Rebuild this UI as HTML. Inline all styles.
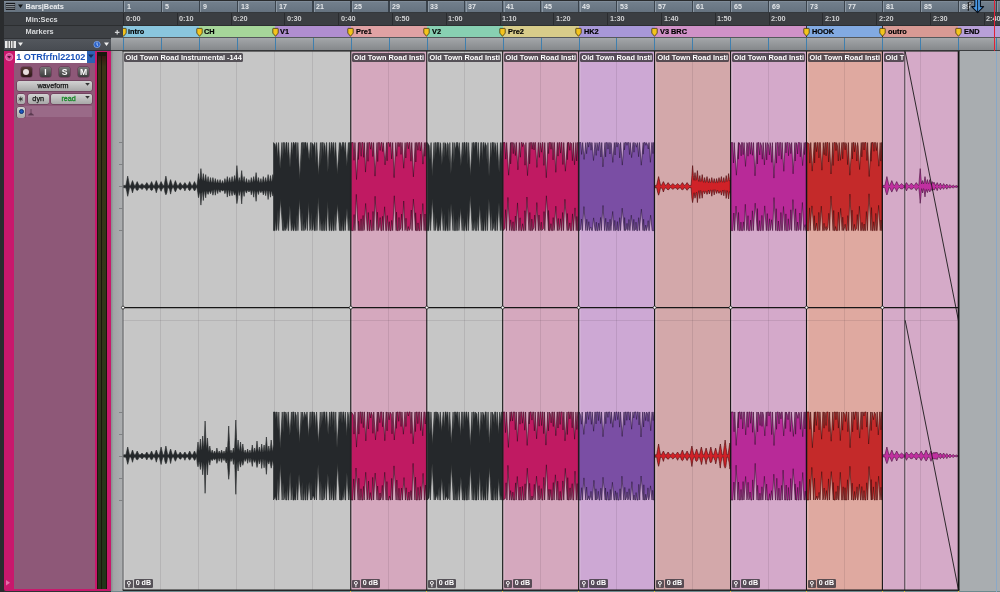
<!DOCTYPE html><html><head><meta charset="utf-8"><title>Pro Tools Edit Window</title><style>
*{box-sizing:border-box;margin:0;padding:0}
html,body{width:1000px;height:592px;overflow:hidden;background:#2b2d30;font-family:"Liberation Sans",sans-serif;}
#app{position:relative;width:1000px;height:592px;overflow:hidden;background:#303236}
.abs{position:absolute}
.rl,.bn,.ms,.mkt,.cl,.db,.btn,.tn{will-change:transform}
.rl{position:absolute;left:0;width:122px;color:#d8dadc;font-weight:bold;font-size:7.4px;letter-spacing:-0.05px}
.rl span{position:absolute;left:25.6px;top:1.3px;white-space:nowrap;line-height:9px}
.bn{position:absolute;top:3px;font-size:7.1px;font-weight:bold;color:#e4e7ea;line-height:9px}
.ms{position:absolute;top:14.4px;font-size:7.3px;font-weight:bold;color:#cfd0d2;line-height:9px}
.mk{position:absolute;top:26px;height:12px}
.mkt{position:absolute;top:27px;font-size:7.35px;-webkit-text-stroke:0.2px #000;font-weight:bold;color:#000;line-height:10px;white-space:nowrap}
.clip{position:absolute;top:51px;height:539px}
.cl{position:absolute;top:52.6px;height:9.4px;background:rgba(60,55,62,.82);color:#fff;font-weight:bold;font-size:7.35px;line-height:9.6px;padding-left:1.6px;border-radius:1.5px;white-space:nowrap;overflow:hidden}
.db{position:absolute;top:579.3px;height:8.6px;font-size:7.1px;font-weight:bold;color:#fff;line-height:8.6px;white-space:nowrap}
.db i{display:inline-block;width:7.6px;height:8px;background:rgba(60,55,62,.8);border-radius:1px;vertical-align:top;margin-right:1.6px;margin-top:0.5px;position:relative}
.db b{display:inline-block;height:8.6px;line-height:9.4px;background:rgba(60,55,62,.82);border-radius:1.3px;padding:0 1.5px;vertical-align:top}
.btn{position:absolute;border-radius:2px;font-weight:bold;color:#fff;text-align:center;box-shadow:0 0 0 0.5px rgba(40,20,35,.55)}
</style></head><body><div id="app">
<div class="abs" style="left:0;top:0;width:1000px;height:1px;background:#2a2c2e"></div>
<div class="abs" style="left:4px;top:1px;width:996px;height:12px;background:linear-gradient(#8793a0 0,#727f8c 10%,#64717e 100%)"></div>
<div class="abs" style="left:4px;top:13px;width:996px;height:13px;background:#3b3e42"></div>
<div class="abs" style="left:4px;top:25.5px;width:119px;height:12px;background:#3e4145"></div>
<div class="abs" style="left:4px;top:25px;width:996px;height:1px;background:#2c2e30"></div>
<div class="abs" style="left:4px;top:12px;width:996px;height:1px;background:#34383c"></div>
<div class="rl" style="top:1px;height:12px"><span style="color:#eceef0">Bars|Beats</span></div>
<div class="rl" style="top:14px;height:12px"><span>Min:Secs</span></div>
<div class="rl" style="top:26px;height:12px"><span>Markers</span></div>
<svg class="abs" style="left:4px;top:2px" width="20" height="10" viewBox="0 0 20 10"><rect x="1.3" y="0.6" width="10.2" height="7.6" fill="#15171b" stroke="#8a96a2" stroke-width="0.5"/><path d="M2 2.6h8.8M2 4.4h8.8M2 6.2h8.8" stroke="#d0d8e0" stroke-width="0.7"/><path d="M14 2.6h5l-2.5 3.4z" fill="#121416"/></svg>
<svg class="abs" style="left:114px;top:29px" width="7" height="7"><path d="M3.2 1v4.6M0.9 3.3h4.6" stroke="#d4d6d8" stroke-width="1.2"/></svg>
<div class="abs" style="left:123.8px;top:1px;width:1px;height:11px;background:#8c98a4"></div>
<div class="abs" style="left:122.5px;top:1px;width:1.2px;height:11px;background:#3a434c"></div>
<div class="bn" style="left:126.5px">1</div>
<div class="abs" style="left:161.7px;top:1px;width:1px;height:11px;background:#8c98a4"></div>
<div class="abs" style="left:160.5px;top:1px;width:1.2px;height:11px;background:#3a434c"></div>
<div class="bn" style="left:164.5px">5</div>
<div class="abs" style="left:199.7px;top:1px;width:1px;height:11px;background:#8c98a4"></div>
<div class="abs" style="left:198.5px;top:1px;width:1.2px;height:11px;background:#3a434c"></div>
<div class="bn" style="left:202.5px">9</div>
<div class="abs" style="left:237.7px;top:1px;width:1px;height:11px;background:#8c98a4"></div>
<div class="abs" style="left:236.5px;top:1px;width:1.2px;height:11px;background:#3a434c"></div>
<div class="bn" style="left:240.5px">13</div>
<div class="abs" style="left:275.7px;top:1px;width:1px;height:11px;background:#8c98a4"></div>
<div class="abs" style="left:274.5px;top:1px;width:1.2px;height:11px;background:#3a434c"></div>
<div class="bn" style="left:278.5px">17</div>
<div class="abs" style="left:313.6px;top:1px;width:1px;height:11px;background:#8c98a4"></div>
<div class="abs" style="left:312.4px;top:1px;width:1.2px;height:11px;background:#3a434c"></div>
<div class="bn" style="left:316.4px">21</div>
<div class="abs" style="left:351.6px;top:1px;width:1px;height:11px;background:#8c98a4"></div>
<div class="abs" style="left:350.4px;top:1px;width:1.2px;height:11px;background:#3a434c"></div>
<div class="bn" style="left:354.4px">25</div>
<div class="abs" style="left:389.6px;top:1px;width:1px;height:11px;background:#8c98a4"></div>
<div class="abs" style="left:388.4px;top:1px;width:1.2px;height:11px;background:#3a434c"></div>
<div class="bn" style="left:392.4px">29</div>
<div class="abs" style="left:427.6px;top:1px;width:1px;height:11px;background:#8c98a4"></div>
<div class="abs" style="left:426.4px;top:1px;width:1.2px;height:11px;background:#3a434c"></div>
<div class="bn" style="left:430.4px">33</div>
<div class="abs" style="left:465.5px;top:1px;width:1px;height:11px;background:#8c98a4"></div>
<div class="abs" style="left:464.3px;top:1px;width:1.2px;height:11px;background:#3a434c"></div>
<div class="bn" style="left:468.3px">37</div>
<div class="abs" style="left:503.5px;top:1px;width:1px;height:11px;background:#8c98a4"></div>
<div class="abs" style="left:502.3px;top:1px;width:1.2px;height:11px;background:#3a434c"></div>
<div class="bn" style="left:506.3px">41</div>
<div class="abs" style="left:541.5px;top:1px;width:1px;height:11px;background:#8c98a4"></div>
<div class="abs" style="left:540.3px;top:1px;width:1.2px;height:11px;background:#3a434c"></div>
<div class="bn" style="left:544.3px">45</div>
<div class="abs" style="left:579.5px;top:1px;width:1px;height:11px;background:#8c98a4"></div>
<div class="abs" style="left:578.3px;top:1px;width:1.2px;height:11px;background:#3a434c"></div>
<div class="bn" style="left:582.3px">49</div>
<div class="abs" style="left:617.4px;top:1px;width:1px;height:11px;background:#8c98a4"></div>
<div class="abs" style="left:616.2px;top:1px;width:1.2px;height:11px;background:#3a434c"></div>
<div class="bn" style="left:620.2px">53</div>
<div class="abs" style="left:655.4px;top:1px;width:1px;height:11px;background:#8c98a4"></div>
<div class="abs" style="left:654.2px;top:1px;width:1.2px;height:11px;background:#3a434c"></div>
<div class="bn" style="left:658.2px">57</div>
<div class="abs" style="left:693.4px;top:1px;width:1px;height:11px;background:#8c98a4"></div>
<div class="abs" style="left:692.2px;top:1px;width:1.2px;height:11px;background:#3a434c"></div>
<div class="bn" style="left:696.2px">61</div>
<div class="abs" style="left:731.4px;top:1px;width:1px;height:11px;background:#8c98a4"></div>
<div class="abs" style="left:730.2px;top:1px;width:1.2px;height:11px;background:#3a434c"></div>
<div class="bn" style="left:734.2px">65</div>
<div class="abs" style="left:769.3px;top:1px;width:1px;height:11px;background:#8c98a4"></div>
<div class="abs" style="left:768.1px;top:1px;width:1.2px;height:11px;background:#3a434c"></div>
<div class="bn" style="left:772.1px">69</div>
<div class="abs" style="left:807.3px;top:1px;width:1px;height:11px;background:#8c98a4"></div>
<div class="abs" style="left:806.1px;top:1px;width:1.2px;height:11px;background:#3a434c"></div>
<div class="bn" style="left:810.1px">73</div>
<div class="abs" style="left:845.3px;top:1px;width:1px;height:11px;background:#8c98a4"></div>
<div class="abs" style="left:844.1px;top:1px;width:1.2px;height:11px;background:#3a434c"></div>
<div class="bn" style="left:848.1px">77</div>
<div class="abs" style="left:883.2px;top:1px;width:1px;height:11px;background:#8c98a4"></div>
<div class="abs" style="left:882.1px;top:1px;width:1.2px;height:11px;background:#3a434c"></div>
<div class="bn" style="left:886.1px">81</div>
<div class="abs" style="left:921.2px;top:1px;width:1px;height:11px;background:#8c98a4"></div>
<div class="abs" style="left:920.0px;top:1px;width:1.2px;height:11px;background:#3a434c"></div>
<div class="bn" style="left:924.0px">85</div>
<div class="abs" style="left:959.2px;top:1px;width:1px;height:11px;background:#8c98a4"></div>
<div class="abs" style="left:958.0px;top:1px;width:1.2px;height:11px;background:#3a434c"></div>
<div class="bn" style="left:962.0px">89</div>
<div class="abs" style="left:997.2px;top:1px;width:1px;height:11px;background:#8c98a4"></div>
<div class="abs" style="left:996.0px;top:1px;width:1.2px;height:11px;background:#3a434c"></div>
<div class="abs" style="left:123.0px;top:13px;width:1px;height:12px;background:#2a2c2f"></div>
<div class="ms" style="left:125.5px">0:00</div>
<div class="abs" style="left:176.8px;top:13px;width:1px;height:12px;background:#2a2c2f"></div>
<div class="ms" style="left:179.3px">0:10</div>
<div class="abs" style="left:230.6px;top:13px;width:1px;height:12px;background:#2a2c2f"></div>
<div class="ms" style="left:233.1px">0:20</div>
<div class="abs" style="left:284.4px;top:13px;width:1px;height:12px;background:#2a2c2f"></div>
<div class="ms" style="left:286.9px">0:30</div>
<div class="abs" style="left:338.2px;top:13px;width:1px;height:12px;background:#2a2c2f"></div>
<div class="ms" style="left:340.7px">0:40</div>
<div class="abs" style="left:392.0px;top:13px;width:1px;height:12px;background:#2a2c2f"></div>
<div class="ms" style="left:394.5px">0:50</div>
<div class="abs" style="left:445.8px;top:13px;width:1px;height:12px;background:#2a2c2f"></div>
<div class="ms" style="left:448.3px">1:00</div>
<div class="abs" style="left:499.6px;top:13px;width:1px;height:12px;background:#2a2c2f"></div>
<div class="ms" style="left:502.1px">1:10</div>
<div class="abs" style="left:553.4px;top:13px;width:1px;height:12px;background:#2a2c2f"></div>
<div class="ms" style="left:555.9px">1:20</div>
<div class="abs" style="left:607.2px;top:13px;width:1px;height:12px;background:#2a2c2f"></div>
<div class="ms" style="left:609.7px">1:30</div>
<div class="abs" style="left:661.0px;top:13px;width:1px;height:12px;background:#2a2c2f"></div>
<div class="ms" style="left:663.5px">1:40</div>
<div class="abs" style="left:714.8px;top:13px;width:1px;height:12px;background:#2a2c2f"></div>
<div class="ms" style="left:717.3px">1:50</div>
<div class="abs" style="left:768.6px;top:13px;width:1px;height:12px;background:#2a2c2f"></div>
<div class="ms" style="left:771.1px">2:00</div>
<div class="abs" style="left:822.4px;top:13px;width:1px;height:12px;background:#2a2c2f"></div>
<div class="ms" style="left:824.9px">2:10</div>
<div class="abs" style="left:876.2px;top:13px;width:1px;height:12px;background:#2a2c2f"></div>
<div class="ms" style="left:878.7px">2:20</div>
<div class="abs" style="left:930.0px;top:13px;width:1px;height:12px;background:#2a2c2f"></div>
<div class="ms" style="left:932.5px">2:30</div>
<div class="abs" style="left:983.8px;top:13px;width:1px;height:12px;background:#2a2c2f"></div>
<div class="ms" style="left:986.3px">2:40</div>
<div class="abs" style="left:123px;top:25.5px;width:877px;height:11.7px;overflow:hidden">
<div class="mk" style="top:0;left:-0.0px;width:76.0px;background:#8ac6de"></div>
<div class="mk" style="top:0;left:75.9px;width:76.0px;background:#a6d69a"></div>
<div class="mk" style="top:0;left:151.9px;width:75.9px;background:#b08ed0"></div>
<div class="mk" style="top:0;left:227.8px;width:75.9px;background:#e0a2a4"></div>
<div class="mk" style="top:0;left:303.8px;width:75.9px;background:#88d0b2"></div>
<div class="mk" style="top:0;left:379.7px;width:76.0px;background:#d8cc8a"></div>
<div class="mk" style="top:0;left:455.7px;width:75.9px;background:#a898d8"></div>
<div class="mk" style="top:0;left:531.6px;width:151.9px;background:#d092c8"></div>
<div class="mk" style="top:0;left:683.5px;width:75.9px;background:#82aae2"></div>
<div class="mk" style="top:0;left:759.5px;width:76.0px;background:#d89a94"></div>
<div class="mk" style="top:0;left:835.4px;width:41.6px;background:#b8a0d8"></div>
<svg class="abs" style="left:-3.5px;top:0" width="8" height="12" viewBox="0 0 8 12"><path d="M1.3 2.4h4.4q0.5 0 0.5 0.5v4.2l-2.7 3.2l-2.7-3.2v-4.2q0-0.5 0.5-0.5z" fill="#f4c41c" stroke="#3c3008" stroke-width="0.75"/></svg>
<div class="mkt" style="top:1.2px;left:5.2px">intro</div>
<svg class="abs" style="left:72.5px;top:0" width="8" height="12" viewBox="0 0 8 12"><path d="M1.3 2.4h4.4q0.5 0 0.5 0.5v4.2l-2.7 3.2l-2.7-3.2v-4.2q0-0.5 0.5-0.5z" fill="#f4c41c" stroke="#3c3008" stroke-width="0.75"/></svg>
<div class="mkt" style="top:1.2px;left:81.1px">CH</div>
<svg class="abs" style="left:148.5px;top:0" width="8" height="12" viewBox="0 0 8 12"><path d="M1.3 2.4h4.4q0.5 0 0.5 0.5v4.2l-2.7 3.2l-2.7-3.2v-4.2q0-0.5 0.5-0.5z" fill="#f4c41c" stroke="#3c3008" stroke-width="0.75"/></svg>
<div class="mkt" style="top:1.2px;left:157.1px">V1</div>
<svg class="abs" style="left:224.4px;top:0" width="8" height="12" viewBox="0 0 8 12"><path d="M1.3 2.4h4.4q0.5 0 0.5 0.5v4.2l-2.7 3.2l-2.7-3.2v-4.2q0-0.5 0.5-0.5z" fill="#f4c41c" stroke="#3c3008" stroke-width="0.75"/></svg>
<div class="mkt" style="top:1.2px;left:233.0px">Pre1</div>
<svg class="abs" style="left:300.4px;top:0" width="8" height="12" viewBox="0 0 8 12"><path d="M1.3 2.4h4.4q0.5 0 0.5 0.5v4.2l-2.7 3.2l-2.7-3.2v-4.2q0-0.5 0.5-0.5z" fill="#f4c41c" stroke="#3c3008" stroke-width="0.75"/></svg>
<div class="mkt" style="top:1.2px;left:308.9px">V2</div>
<svg class="abs" style="left:376.3px;top:0" width="8" height="12" viewBox="0 0 8 12"><path d="M1.3 2.4h4.4q0.5 0 0.5 0.5v4.2l-2.7 3.2l-2.7-3.2v-4.2q0-0.5 0.5-0.5z" fill="#f4c41c" stroke="#3c3008" stroke-width="0.75"/></svg>
<div class="mkt" style="top:1.2px;left:384.9px">Pre2</div>
<svg class="abs" style="left:452.3px;top:0" width="8" height="12" viewBox="0 0 8 12"><path d="M1.3 2.4h4.4q0.5 0 0.5 0.5v4.2l-2.7 3.2l-2.7-3.2v-4.2q0-0.5 0.5-0.5z" fill="#f4c41c" stroke="#3c3008" stroke-width="0.75"/></svg>
<div class="mkt" style="top:1.2px;left:460.9px">HK2</div>
<svg class="abs" style="left:528.2px;top:0" width="8" height="12" viewBox="0 0 8 12"><path d="M1.3 2.4h4.4q0.5 0 0.5 0.5v4.2l-2.7 3.2l-2.7-3.2v-4.2q0-0.5 0.5-0.5z" fill="#f4c41c" stroke="#3c3008" stroke-width="0.75"/></svg>
<div class="mkt" style="top:1.2px;left:536.8px">V3 BRC</div>
<svg class="abs" style="left:680.1px;top:0" width="8" height="12" viewBox="0 0 8 12"><path d="M1.3 2.4h4.4q0.5 0 0.5 0.5v4.2l-2.7 3.2l-2.7-3.2v-4.2q0-0.5 0.5-0.5z" fill="#f4c41c" stroke="#3c3008" stroke-width="0.75"/></svg>
<div class="mkt" style="top:1.2px;left:688.7px">HOOK</div>
<svg class="abs" style="left:756.1px;top:0" width="8" height="12" viewBox="0 0 8 12"><path d="M1.3 2.4h4.4q0.5 0 0.5 0.5v4.2l-2.7 3.2l-2.7-3.2v-4.2q0-0.5 0.5-0.5z" fill="#f4c41c" stroke="#3c3008" stroke-width="0.75"/></svg>
<div class="mkt" style="top:1.2px;left:764.7px">outro</div>
<svg class="abs" style="left:832.0px;top:0" width="8" height="12" viewBox="0 0 8 12"><path d="M1.3 2.4h4.4q0.5 0 0.5 0.5v4.2l-2.7 3.2l-2.7-3.2v-4.2q0-0.5 0.5-0.5z" fill="#f4c41c" stroke="#3c3008" stroke-width="0.75"/></svg>
<div class="mkt" style="top:1.2px;left:840.6px">END</div>
</div>
<div class="abs" style="left:4px;top:38.5px;width:107px;height:11.8px;background:linear-gradient(#53575d,#484c52)"></div>
<svg class="abs" style="left:4px;top:39px" width="110" height="11" viewBox="0 0 110 11"><rect x="1" y="2" width="11" height="7" fill="#e8e8e8"/><path d="M4 2v7M6.5 2v7M9 2v7" stroke="#333" stroke-width="0.8"/><path d="M14 3.5h5l-2.5 3.5z" fill="#eee"/><circle cx="93" cy="5.5" r="3.2" fill="#2a62c8" stroke="#9ab8f0" stroke-width="0.6"/><path d="M93 3.5v2.3l1.2 1" stroke="#fff" stroke-width="0.7" fill="none"/><path d="M100 3.5h5l-2.5 3.5z" fill="#eee"/></svg>
<div class="abs" style="left:111px;top:37.2px;width:889px;height:13.3px;background:linear-gradient(#55585b 0,#55585b 8%,#a4a8ab 9%,#9c9fa2 30%,#85888b 100%)"></div>
<div class="abs" style="left:111px;top:50.3px;width:889px;height:1px;background:#3c3e40"></div>
<div class="abs" style="left:122.8px;top:38.3px;width:1px;height:12px;background:#3f7fae"></div>
<div class="abs" style="left:160.7px;top:38.3px;width:1px;height:12px;background:#3f7fae"></div>
<div class="abs" style="left:198.7px;top:38.3px;width:1px;height:12px;background:#3f7fae"></div>
<div class="abs" style="left:236.7px;top:38.3px;width:1px;height:12px;background:#3f7fae"></div>
<div class="abs" style="left:274.7px;top:38.3px;width:1px;height:12px;background:#3f7fae"></div>
<div class="abs" style="left:312.6px;top:38.3px;width:1px;height:12px;background:#3f7fae"></div>
<div class="abs" style="left:350.6px;top:38.3px;width:1px;height:12px;background:#3f7fae"></div>
<div class="abs" style="left:388.6px;top:38.3px;width:1px;height:12px;background:#3f7fae"></div>
<div class="abs" style="left:426.6px;top:38.3px;width:1px;height:12px;background:#3f7fae"></div>
<div class="abs" style="left:464.5px;top:38.3px;width:1px;height:12px;background:#3f7fae"></div>
<div class="abs" style="left:502.5px;top:38.3px;width:1px;height:12px;background:#3f7fae"></div>
<div class="abs" style="left:540.5px;top:38.3px;width:1px;height:12px;background:#3f7fae"></div>
<div class="abs" style="left:578.5px;top:38.3px;width:1px;height:12px;background:#3f7fae"></div>
<div class="abs" style="left:616.4px;top:38.3px;width:1px;height:12px;background:#3f7fae"></div>
<div class="abs" style="left:654.4px;top:38.3px;width:1px;height:12px;background:#3f7fae"></div>
<div class="abs" style="left:692.4px;top:38.3px;width:1px;height:12px;background:#3f7fae"></div>
<div class="abs" style="left:730.4px;top:38.3px;width:1px;height:12px;background:#3f7fae"></div>
<div class="abs" style="left:768.3px;top:38.3px;width:1px;height:12px;background:#3f7fae"></div>
<div class="abs" style="left:806.3px;top:38.3px;width:1px;height:12px;background:#3f7fae"></div>
<div class="abs" style="left:844.3px;top:38.3px;width:1px;height:12px;background:#3f7fae"></div>
<div class="abs" style="left:882.2px;top:38.3px;width:1px;height:12px;background:#3f7fae"></div>
<div class="abs" style="left:920.2px;top:38.3px;width:1px;height:12px;background:#3f7fae"></div>
<div class="abs" style="left:958.2px;top:38.3px;width:1px;height:12px;background:#3f7fae"></div>
<div class="abs" style="left:996.2px;top:38.3px;width:1px;height:12px;background:#3f7fae"></div>
<div class="abs" style="left:0;top:0;width:4px;height:592px;background:#2a2c2e"></div>
<div class="abs" style="left:4px;top:50.7px;width:107.4px;height:540.4px;background:#c8186c;border-radius:0 0 0 2px"></div>
<div class="abs" style="left:14.2px;top:62.8px;width:80.5px;height:526.6px;background:#8e5878"></div>
<div class="abs tn" style="left:14.5px;top:51.2px;width:72px;height:11.6px;background:#fff;color:#1a52b8;font-weight:bold;font-size:9.1px;line-height:12.8px;padding-left:1.3px;overflow:hidden;white-space:nowrap;letter-spacing:-0.05px">1 OTRfrfnl22102</div>
<div class="abs" style="left:86.5px;top:51.2px;width:8.3px;height:11.6px;background:#2c62b4"></div>
<svg class="abs" style="left:86.7px;top:51.6px" width="8" height="11"><path d="M1.2 2.5h5.6l-2.8 3.6z" fill="#122a58"/></svg>
<svg class="abs" style="left:4px;top:52px" width="10" height="11"><circle cx="5.2" cy="5" r="3.6" fill="#d84c98" stroke="#f0a0cc" stroke-width="0.7"/><path d="M3.2 4h4l-2 2.6z" fill="#5a0c38"/></svg>
<div class="abs" style="left:97.2px;top:52px;width:9.6px;height:537.4px;background:#1a180c"></div>
<div class="abs" style="left:98px;top:56px;width:3.4px;height:533px;background:linear-gradient(#3a1612 0,#3a3416 2%,#34361a 45%,#22341a 100%)"></div>
<div class="abs" style="left:102.4px;top:56px;width:3.4px;height:533px;background:linear-gradient(#3a1612 0,#3a3416 2%,#34361a 45%,#22341a 100%)"></div>
<div class="btn" style="left:20.5px;top:66.5px;width:11px;height:10px;background:linear-gradient(#5a3838,#2e1818);color:#fff;font-size:8px;line-height:10px"></div>
<div class="abs" style="left:23px;top:68.5px;width:6px;height:6px;border-radius:3px;background:#e8dede"></div>
<div class="btn" style="left:39.5px;top:66.5px;width:11px;height:10px;background:linear-gradient(#787878,#3c3c3c);color:#fff;font-size:8.6px;line-height:10px">I</div>
<div class="btn" style="left:58.5px;top:66.5px;width:11px;height:10px;background:linear-gradient(#787878,#3c3c3c);color:#fff;font-size:8.6px;line-height:10px">S</div>
<div class="btn" style="left:77.5px;top:66.5px;width:11px;height:10px;background:linear-gradient(#787878,#3c3c3c);color:#fff;font-size:8.6px;line-height:10px">M</div>
<div class="btn" style="left:17px;top:81px;width:75px;height:10px;background:linear-gradient(#d2d2d2,#a8a8a8);color:#111;font-size:7.2px;line-height:10px"><span style="font-weight:normal;-webkit-text-stroke:0.25px #111;margin-right:3px">waveform</span></div>
<div class="btn" style="left:17px;top:94px;width:7.5px;height:10px;background:linear-gradient(#d2d2d2,#a8a8a8);color:#222;font-size:6px;line-height:10px"></div>
<svg class="abs" style="left:17px;top:94px" width="8" height="10"><path d="M3.75 2.6v4.8M1.6 3.8l4.3 2.4M1.6 6.2l4.3-2.4" stroke="#222" stroke-width="0.8"/></svg>
<div class="btn" style="left:27.5px;top:94px;width:20.5px;height:10px;background:linear-gradient(#d2d2d2,#a8a8a8);color:#111;font-size:7.3px;line-height:10px"><span style="font-weight:normal;-webkit-text-stroke:0.25px #111">dyn</span></div>
<div class="btn" style="left:51px;top:94px;width:41px;height:10px;background:linear-gradient(#d2d2d2,#a8a8a8);color:#1a8a2a;font-size:7.1px;line-height:10px"><span style="margin-right:6px;font-weight:normal;-webkit-text-stroke:0.3px #1a8a2a">read</span></div>
<svg class="abs" style="left:84px;top:82px" width="8" height="20"><path d="M1.2 1h4.6l-2.3 2.8z" fill="#333"/><path d="M1.2 14h4.6l-2.3 2.8z" fill="#333"/></svg>
<div class="abs" style="left:17px;top:106px;width:75px;height:11px;background:#9a6a88"></div>
<div class="btn" style="left:17px;top:106.5px;width:8px;height:10.5px;background:linear-gradient(#d2d2d2,#a8a8a8);color:#fff;font-size:8px;line-height:10.5px"></div>
<div class="abs" style="left:18.5px;top:109px;width:5px;height:5px;border-radius:3px;background:#1c58c0;border:1px solid #0c2c70"></div>
<svg class="abs" style="left:27px;top:108px" width="8" height="8"><path d="M4 1v4M1.5 7l2.5-2l2.5 2z" stroke="#5a3a50" stroke-width="0.8" fill="#5a3a50"/></svg>
<svg class="abs" style="left:4px;top:578px" width="10" height="10"><path d="M2 2l4 2.7l-4 2.7z" fill="#e070a8"/></svg>
<div class="abs" style="left:111px;top:51px;width:12px;height:541px;background:linear-gradient(90deg,#888a8c 0,#a2a4a6 22%,#acaeb0 100%)"></div>
<div class="abs" style="left:959px;top:51px;width:41px;height:541px;background:#a9adb0"></div>
<div class="clip" style="left:123px;width:227.8px;background:#c6c6c6;box-shadow:inset 1.4px 1px 0 rgba(255,255,255,.28)"></div>
<div class="clip" style="left:350.8px;width:76px;background:#d5a8be;box-shadow:inset 1.4px 1px 0 rgba(255,255,255,.28)"></div>
<div class="clip" style="left:426.8px;width:75.9px;background:#c6c6c6;box-shadow:inset 1.4px 1px 0 rgba(255,255,255,.28)"></div>
<div class="clip" style="left:502.7px;width:76px;background:#d5a8be;box-shadow:inset 1.4px 1px 0 rgba(255,255,255,.28)"></div>
<div class="clip" style="left:578.7px;width:75.9px;background:#cda8d4;box-shadow:inset 1.4px 1px 0 rgba(255,255,255,.28)"></div>
<div class="clip" style="left:654.6px;width:76px;background:#d3a8aa;box-shadow:inset 1.4px 1px 0 rgba(255,255,255,.28)"></div>
<div class="clip" style="left:730.6px;width:75.9px;background:#d4a9ca;box-shadow:inset 1.4px 1px 0 rgba(255,255,255,.28)"></div>
<div class="clip" style="left:806.5px;width:75.9px;background:#dfa9a0;box-shadow:inset 1.4px 1px 0 rgba(255,255,255,.28)"></div>
<div class="clip" style="left:882.4px;width:22.4px;background:#d5aac8;box-shadow:inset 1.4px 1px 0 rgba(255,255,255,.28)"></div>
<div class="clip" style="left:904.8px;width:53.6px;background:#d5aac8;box-shadow:inset 1.4px 1px 0 rgba(255,255,255,.28)"></div>
<div class="abs" style="left:122.5px;top:51px;width:1px;height:539px;background:rgba(40,30,40,.10)"></div>
<div class="abs" style="left:160.4px;top:51px;width:1px;height:539px;background:rgba(40,30,40,.10)"></div>
<div class="abs" style="left:198.4px;top:51px;width:1px;height:539px;background:rgba(40,30,40,.10)"></div>
<div class="abs" style="left:236.4px;top:51px;width:1px;height:539px;background:rgba(40,30,40,.10)"></div>
<div class="abs" style="left:274.4px;top:51px;width:1px;height:539px;background:rgba(40,30,40,.10)"></div>
<div class="abs" style="left:312.3px;top:51px;width:1px;height:539px;background:rgba(40,30,40,.10)"></div>
<div class="abs" style="left:350.3px;top:51px;width:1px;height:539px;background:rgba(40,30,40,.10)"></div>
<div class="abs" style="left:388.3px;top:51px;width:1px;height:539px;background:rgba(40,30,40,.10)"></div>
<div class="abs" style="left:426.2px;top:51px;width:1px;height:539px;background:rgba(40,30,40,.10)"></div>
<div class="abs" style="left:464.2px;top:51px;width:1px;height:539px;background:rgba(40,30,40,.10)"></div>
<div class="abs" style="left:502.2px;top:51px;width:1px;height:539px;background:rgba(40,30,40,.10)"></div>
<div class="abs" style="left:540.2px;top:51px;width:1px;height:539px;background:rgba(40,30,40,.10)"></div>
<div class="abs" style="left:578.2px;top:51px;width:1px;height:539px;background:rgba(40,30,40,.10)"></div>
<div class="abs" style="left:616.1px;top:51px;width:1px;height:539px;background:rgba(40,30,40,.10)"></div>
<div class="abs" style="left:654.1px;top:51px;width:1px;height:539px;background:rgba(40,30,40,.10)"></div>
<div class="abs" style="left:692.1px;top:51px;width:1px;height:539px;background:rgba(40,30,40,.10)"></div>
<div class="abs" style="left:730.1px;top:51px;width:1px;height:539px;background:rgba(40,30,40,.10)"></div>
<div class="abs" style="left:768.0px;top:51px;width:1px;height:539px;background:rgba(40,30,40,.10)"></div>
<div class="abs" style="left:806.0px;top:51px;width:1px;height:539px;background:rgba(40,30,40,.10)"></div>
<div class="abs" style="left:844.0px;top:51px;width:1px;height:539px;background:rgba(40,30,40,.10)"></div>
<div class="abs" style="left:882.0px;top:51px;width:1px;height:539px;background:rgba(40,30,40,.10)"></div>
<div class="abs" style="left:919.9px;top:51px;width:1px;height:539px;background:rgba(40,30,40,.10)"></div>
<div class="abs" style="left:957.9px;top:51px;width:1px;height:539px;background:rgba(40,30,40,.10)"></div>
<div class="abs" style="left:123px;top:320px;width:836px;height:1px;background:rgba(40,30,40,.10)"></div>
<svg class="abs" style="left:0;top:0" width="1000" height="592" viewBox="0 0 1000 592">
<path d="M123.6 185.4 L125.9 185.4 L126.8 180.8 L127.7 176.1 L128.6 180.7 L129.5 185.4 L130.7 185.4 L131.6 183.0 L132.5 180.6 L133.4 183.0 L134.3 185.4 L135.4 185.4 L136.3 183.5 L137.2 181.6 L138.1 183.5 L139.0 185.4 L140.2 185.4 L141.1 184.5 L142.0 183.6 L142.9 184.5 L143.8 185.4 L145.0 185.4 L145.9 184.0 L146.8 182.6 L147.7 184.0 L148.6 185.4 L149.8 185.4 L150.7 183.5 L151.6 181.6 L152.4 183.5 L153.3 185.4 L154.5 185.4 L155.4 183.0 L156.3 180.6 L157.2 183.0 L158.1 185.4 L159.3 185.4 L160.2 183.5 L161.1 181.6 L162.0 183.5 L162.9 185.4 L164.1 185.4 L165.0 180.8 L165.9 176.1 L166.8 180.7 L167.7 185.4 L168.8 185.4 L169.7 182.5 L170.6 179.6 L171.5 182.5 L172.4 185.4 L173.6 185.4 L174.5 183.0 L175.4 180.6 L176.3 183.0 L177.2 185.4 L178.4 185.4 L179.3 184.0 L180.2 182.6 L181.1 184.0 L182.0 185.4 L183.1 185.4 L184.0 184.0 L184.9 182.6 L185.8 184.0 L186.7 185.4 L187.9 185.4 L188.8 183.5 L189.7 181.6 L190.6 183.5 L191.5 185.4 L192.7 185.4 L193.6 183.5 L194.5 181.6 L195.4 183.5 L196.3 185.4 L197.0 185.4 L197.8 179.5 L198.5 173.6 L199.2 179.5 L199.4 180.7 L200.0 178.7 L200.2 177.0 L200.9 168.6 L201.7 177.0 L201.8 178.7 L202.4 180.7 L202.6 179.5 L203.3 173.6 L204.1 179.5 L204.2 180.7 L204.8 181.1 L204.9 180.0 L205.7 174.6 L206.4 180.0 L206.6 181.1 L207.2 181.9 L207.3 181.0 L208.1 176.6 L208.8 181.0 L209.0 181.9 L209.6 182.3 L209.8 181.5 L210.5 177.6 L211.2 181.5 L211.4 182.3 L212.0 182.3 L212.2 181.5 L212.9 177.6 L213.7 181.5 L213.8 182.3 L214.4 182.7 L214.6 182.0 L215.3 178.6 L216.1 182.0 L216.2 182.7 L216.8 183.1 L216.9 182.5 L217.7 179.6 L218.4 182.5 L218.6 183.1 L219.2 183.1 L219.3 182.5 L220.1 179.6 L220.8 182.5 L221.0 183.1 L221.6 183.5 L221.8 183.0 L222.5 180.6 L223.2 183.0 L223.4 183.5 L224.0 182.7 L224.2 182.0 L224.9 178.6 L225.7 182.0 L225.8 182.7 L226.4 181.9 L226.6 181.0 L227.3 176.6 L228.1 181.0 L228.2 181.9 L228.8 182.3 L228.9 181.5 L229.7 177.6 L230.4 181.5 L230.6 182.3 L231.2 181.9 L231.3 181.0 L232.1 176.6 L232.8 181.0 L233.0 181.9 L233.6 181.5 L233.8 180.5 L234.5 175.6 L235.2 180.5 L235.4 181.5 L236.0 177.5 L236.2 175.5 L236.9 165.6 L237.7 175.5 L237.8 177.5 L238.4 182.3 L238.6 181.5 L239.3 177.6 L240.1 181.5 L240.2 182.3 L240.8 179.5 L240.9 178.0 L241.7 170.6 L242.4 178.0 L242.6 179.5 L243.2 181.9 L243.3 181.0 L244.1 176.6 L244.8 181.0 L245.0 181.9 L245.6 182.7 L245.8 182.0 L246.5 178.6 L247.2 182.0 L247.4 182.7 L248.0 183.1 L248.2 182.5 L248.9 179.6 L249.7 182.5 L249.8 183.1 L250.4 182.3 L250.6 181.5 L251.3 177.6 L252.1 181.5 L252.2 182.3 L252.8 181.9 L252.9 181.0 L253.7 176.6 L254.4 181.0 L254.6 181.9 L255.2 180.3 L255.3 179.0 L256.1 172.6 L256.9 179.0 L257.0 180.3 L257.6 182.3 L257.8 181.5 L258.5 177.6 L259.2 181.5 L259.4 182.3 L260.0 182.7 L260.1 182.0 L260.9 178.6 L261.6 182.0 L261.8 182.7 L262.4 181.9 L262.6 181.0 L263.3 176.6 L264.1 181.0 L264.2 181.9 L264.8 182.3 L264.9 181.5 L265.7 177.6 L266.4 181.5 L266.6 182.3 L267.2 181.1 L267.4 180.0 L268.1 174.6 L268.9 180.0 L269.0 181.1 L269.6 181.5 L269.8 180.5 L270.5 175.6 L271.2 180.5 L271.4 181.5 L272.0 181.1 L272.1 180.0 L272.9 174.6 L273.5 178.9 L273.5 142.6 L275.1 144.5 L275.7 148.7 L276.4 142.6 L276.9 145.4 L277.6 158.9 L278.5 142.6 L278.6 142.6 L280.1 168.8 L281.9 142.6 L282.1 142.6 L282.8 159.8 L283.5 142.6 L284.4 142.6 L285.3 153.6 L286.0 142.6 L286.9 142.6 L287.6 156.9 L288.5 142.6 L288.7 146.6 L290.0 167.7 L291.5 142.6 L291.6 142.6 L292.2 155.1 L293.1 142.6 L294.0 142.6 L294.7 146.6 L295.4 142.6 L296.2 142.6 L296.9 159.8 L297.8 142.6 L297.9 142.6 L299.7 179.4 L301.5 142.6 L301.6 145.7 L301.8 164.1 L302.4 142.6 L303.5 142.6 L304.0 149.9 L304.6 142.6 L305.9 142.6 L306.6 149.4 L307.3 142.6 L307.6 145.1 L309.1 159.9 L310.5 142.6 L310.6 142.6 L311.2 158.5 L311.8 142.6 L313.1 144.5 L313.7 147.7 L314.6 142.6 L314.9 142.6 L315.8 164.1 L316.6 142.6 L316.7 142.6 L318.5 175.4 L320.4 142.6 L320.5 142.6 L320.8 165.3 L321.7 142.6 L322.6 142.6 L323.4 156.5 L323.9 142.6 L325.0 146.2 L325.6 157.2 L326.4 142.6 L326.7 142.6 L327.9 172.2 L329.3 142.6 L329.7 142.6 L330.5 155.4 L331.3 142.6 L332.0 142.6 L332.8 152.1 L333.4 142.6 L333.8 142.6 L334.6 159.1 L335.5 142.6 L335.6 142.6 L337.3 174.5 L339.4 142.6 L339.5 143.7 L339.5 162.4 L340.3 142.6 L341.2 145.8 L341.9 149.7 L342.4 142.6 L343.6 142.6 L344.4 152.7 L345.1 142.6 L345.4 142.6 L346.8 166.5 L348.4 142.6 L348.5 142.6 L348.8 155.0 L349.5 142.6 L350.4 142.6 L350.4 230.6 L349.7 230.6 L349.0 217.7 L348.4 230.6 L348.3 230.6 L347.0 208.0 L345.4 227.8 L345.3 230.6 L344.6 216.3 L343.9 230.6 L342.9 230.6 L342.3 219.9 L341.7 230.6 L340.4 230.6 L339.5 209.9 L339.6 230.6 L339.5 230.6 L337.5 203.8 L335.9 227.1 L335.8 230.6 L335.0 213.5 L334.1 230.6 L333.3 230.6 L332.7 218.2 L332.0 230.6 L331.1 230.6 L330.4 217.9 L329.7 230.6 L329.1 230.6 L327.7 201.0 L326.6 230.6 L326.0 230.6 L325.4 215.6 L324.6 230.6 L323.7 230.6 L323.1 220.7 L322.5 230.6 L321.6 230.6 L320.6 218.1 L320.1 229.3 L320.0 230.6 L318.2 197.1 L317.0 230.6 L316.9 230.6 L316.2 212.5 L315.3 230.6 L314.2 230.6 L313.4 218.8 L312.8 229.4 L311.9 230.6 L311.2 212.0 L310.6 228.0 L309.9 230.6 L308.6 201.9 L307.4 230.6 L307.3 230.6 L306.7 214.9 L305.9 228.1 L304.8 230.6 L304.2 221.7 L303.3 230.6 L302.8 230.6 L302.0 211.9 L301.6 228.4 L301.5 230.6 L299.4 198.9 L298.0 230.6 L297.9 230.6 L297.0 213.9 L296.4 230.6 L295.4 230.6 L294.7 222.8 L293.9 230.6 L293.0 230.6 L292.1 223.1 L291.5 230.6 L291.2 230.6 L289.9 205.4 L288.6 230.6 L288.1 230.6 L287.3 218.2 L286.7 227.4 L285.7 230.6 L284.9 226.6 L284.2 230.6 L283.6 230.6 L282.7 213.6 L282.8 228.9 L282.7 230.6 L280.5 199.0 L278.7 229.4 L278.6 230.6 L278.0 209.5 L277.0 229.0 L276.3 230.6 L275.6 218.7 L275.0 230.6 L273.5 230.6 L273.5 193.2 L272.9 196.1 L272.1 193.7 L272.0 192.5 L271.4 190.8 L271.2 191.4 L270.5 197.2 L269.8 192.7 L269.6 191.4 L269.0 190.8 L268.9 191.8 L268.1 199.5 L267.4 192.1 L267.2 190.9 L266.6 190.4 L266.4 191.5 L265.7 195.7 L264.9 190.5 L264.8 190.0 L264.2 191.6 L264.1 192.6 L263.3 194.9 L262.6 191.5 L262.4 191.1 L261.8 190.8 L261.6 191.2 L260.9 192.7 L260.1 191.4 L260.0 190.8 L259.4 190.5 L259.2 190.8 L258.5 194.5 L257.8 192.0 L257.6 191.0 L257.0 191.5 L256.9 192.4 L256.1 201.3 L255.3 193.5 L255.2 191.9 L254.6 190.4 L254.4 191.5 L253.7 197.2 L252.9 190.9 L252.8 190.2 L252.2 190.9 L252.1 191.9 L251.3 194.8 L250.6 190.7 L250.4 190.4 L249.8 190.4 L249.7 191.0 L248.9 192.0 L248.2 190.6 L248.0 190.3 L247.4 190.4 L247.2 190.8 L246.5 193.1 L245.8 191.6 L245.6 190.8 L245.0 190.4 L244.8 190.9 L244.1 196.4 L243.3 192.1 L243.2 190.9 L242.6 192.1 L242.4 193.6 L241.7 203.9 L240.9 193.6 L240.8 192.1 L240.2 190.5 L240.1 191.6 L239.3 195.5 L238.6 190.5 L238.4 190.1 L237.8 196.3 L237.7 198.6 L236.9 203.6 L236.2 196.7 L236.0 195.5 L235.4 191.9 L235.2 192.6 L234.5 195.1 L233.8 193.1 L233.6 192.1 L233.0 190.7 L232.8 191.2 L232.1 195.7 L231.3 192.5 L231.2 191.3 L230.6 189.9 L230.4 190.5 L229.7 196.1 L228.9 191.1 L228.8 190.1 L228.2 190.5 L228.1 191.7 L227.3 197.1 L226.6 190.9 L226.4 190.2 L225.8 190.6 L225.7 191.5 L224.9 193.7 L224.2 190.4 L224.0 190.1 L223.4 190.0 L223.2 190.4 L222.5 191.2 L221.8 190.2 L221.6 189.9 L221.0 190.0 L220.8 190.2 L220.1 192.4 L219.3 191.0 L219.2 190.3 L218.6 189.4 L218.4 189.7 L217.7 193.6 L216.9 190.5 L216.8 189.7 L216.2 189.7 L216.1 190.4 L215.3 195.2 L214.6 190.2 L214.4 189.6 L213.8 190.6 L213.7 191.7 L212.9 195.2 L212.2 190.6 L212.0 190.2 L211.4 191.2 L211.2 192.1 L210.5 193.8 L209.8 191.4 L209.6 190.9 L209.0 191.4 L208.8 192.0 L208.1 194.4 L207.3 192.6 L207.2 191.7 L206.6 191.3 L206.4 191.9 L205.7 197.8 L204.9 193.4 L204.8 191.9 L204.2 191.1 L204.1 192.1 L203.3 200.5 L202.6 192.7 L202.4 191.3 L201.8 193.4 L201.7 195.5 L200.9 205.1 L200.2 193.9 L200.0 192.8 L199.4 192.7 L199.2 194.2 L198.5 197.7 L197.8 192.7 L197.0 187.9 L196.3 187.5 L195.4 189.8 L194.5 191.0 L193.6 189.4 L192.7 187.8 L191.5 187.7 L190.6 189.6 L189.7 190.7 L188.8 189.9 L187.9 187.5 L186.7 187.8 L185.8 188.6 L184.9 190.9 L184.0 188.6 L183.1 187.9 L182.0 187.5 L181.1 189.3 L180.2 189.9 L179.3 189.1 L178.4 187.7 L177.2 187.8 L176.3 189.9 L175.4 191.9 L174.5 190.2 L173.6 187.5 L172.4 187.8 L171.5 189.9 L170.6 194.1 L169.7 189.7 L168.8 187.9 L167.7 187.5 L166.8 192.9 L165.9 194.8 L165.0 192.6 L164.1 187.6 L162.9 187.8 L162.0 189.2 L161.1 191.3 L160.2 189.6 L159.3 187.6 L158.1 187.7 L157.2 189.7 L156.3 192.8 L155.4 189.4 L154.5 187.9 L153.3 187.5 L152.4 189.9 L151.6 190.4 L150.7 189.9 L149.8 187.6 L148.6 187.9 L147.7 188.7 L146.8 190.6 L145.9 188.9 L145.0 187.7 L143.8 187.6 L142.9 188.5 L142.0 189.6 L141.1 188.3 L140.2 187.9 L139.0 187.6 L138.1 189.9 L137.2 190.4 L136.3 189.9 L135.4 187.5 L134.3 187.9 L133.4 189.4 L132.5 192.9 L131.6 189.6 L130.7 187.7 L129.5 187.6 L128.6 192.3 L127.7 196.3 L126.8 191.6 L125.9 187.8 L123.6 187.7Z" fill="#25282b" stroke="#25282b" stroke-width="0.62" stroke-linejoin="round"/>
<path d="M123.6 454.8 L125.9 454.8 L126.8 450.9 L127.7 447.0 L128.6 450.9 L129.5 454.8 L130.7 454.8 L131.6 452.4 L132.5 450.0 L133.4 452.4 L134.3 454.8 L135.4 454.8 L136.3 452.9 L137.2 451.0 L138.1 452.9 L139.0 454.8 L140.2 454.8 L141.1 453.9 L142.0 453.0 L142.9 453.9 L143.8 454.8 L145.0 454.8 L145.9 453.4 L146.8 452.0 L147.7 453.4 L148.6 454.8 L149.8 454.8 L150.7 452.9 L151.6 451.0 L152.4 452.9 L153.3 454.8 L154.5 454.8 L155.4 452.4 L156.3 450.0 L157.2 452.4 L158.1 454.8 L159.3 454.8 L160.2 450.9 L161.1 447.0 L162.0 450.9 L162.9 454.8 L164.1 454.8 L165.0 450.4 L165.9 446.0 L166.8 450.4 L167.7 454.8 L168.8 454.8 L169.7 451.9 L170.6 449.0 L171.5 451.9 L172.4 454.8 L173.6 454.8 L174.5 452.4 L175.4 450.0 L176.3 452.4 L177.2 454.8 L178.4 454.8 L179.3 453.4 L180.2 452.0 L181.1 453.4 L182.0 454.8 L183.1 454.8 L184.0 453.4 L184.9 452.0 L185.8 453.4 L186.7 454.8 L187.9 454.8 L188.8 452.9 L189.7 451.0 L190.6 452.9 L191.5 454.8 L192.7 454.8 L193.6 452.9 L194.5 451.0 L195.4 452.9 L196.3 454.8 L196.6 454.8 L197.3 448.4 L198.0 442.0 L198.7 448.4 L199.0 450.8 L199.4 449.8 L199.7 446.9 L200.4 439.0 L201.1 446.9 L201.3 449.8 L201.8 448.9 L202.0 445.4 L202.7 436.0 L203.4 445.4 L203.7 448.9 L204.1 444.2 L204.4 437.9 L205.1 421.0 L205.8 437.9 L206.0 444.2 L206.5 449.5 L206.7 446.4 L207.4 438.0 L208.1 446.4 L208.4 449.5 L208.8 452.0 L209.1 450.4 L209.8 446.0 L210.5 450.4 L210.8 452.0 L211.2 453.3 L211.5 452.4 L212.2 450.0 L212.9 452.4 L213.1 453.3 L213.6 453.6 L213.8 452.9 L214.5 451.0 L215.2 452.9 L215.5 453.6 L215.9 452.7 L216.2 451.4 L216.9 448.0 L217.6 451.4 L217.8 452.7 L218.3 453.6 L218.5 452.9 L219.2 451.0 L219.9 452.9 L220.2 453.6 L220.6 453.3 L220.9 452.4 L221.6 450.0 L222.3 452.4 L222.6 453.3 L223.0 453.6 L223.3 452.9 L224.0 451.0 L224.7 452.9 L224.9 453.6 L225.4 452.3 L225.6 450.9 L226.3 447.0 L227.0 450.9 L227.3 452.3 L227.7 445.7 L228.0 440.4 L228.7 426.0 L229.4 440.4 L229.6 445.7 L230.1 453.3 L230.3 452.4 L231.0 450.0 L231.7 452.4 L232.0 453.3 L232.4 452.7 L232.7 451.4 L233.4 448.0 L234.1 451.4 L234.4 452.7 L234.8 443.9 L235.1 437.4 L235.8 420.0 L236.5 437.4 L236.7 443.9 L237.2 450.1 L237.4 447.4 L238.1 440.0 L238.8 447.4 L239.1 450.1 L239.5 450.8 L239.8 448.4 L240.5 442.0 L241.2 448.4 L241.4 450.8 L241.9 451.4 L242.1 449.4 L242.8 444.0 L243.5 449.4 L243.8 451.4 L244.2 453.3 L244.5 452.4 L245.2 450.0 L245.9 452.4 L246.2 453.3 L246.6 453.0 L246.9 451.9 L247.6 449.0 L248.3 451.9 L248.5 453.0 L249.0 453.3 L249.2 452.4 L249.9 450.0 L250.6 452.4 L250.9 453.3 L251.3 451.7 L251.6 449.9 L252.3 445.0 L253.0 449.9 L253.2 451.7 L253.7 452.7 L253.9 451.4 L254.6 448.0 L255.3 451.4 L255.6 452.7 L256.0 450.5 L256.3 447.9 L257.0 441.0 L257.7 447.9 L258.0 450.5 L258.4 452.3 L258.7 450.9 L259.4 447.0 L260.1 450.9 L260.3 452.3 L260.8 451.4 L261.0 449.4 L261.7 444.0 L262.4 449.4 L262.7 451.4 L263.1 451.7 L263.4 449.9 L264.1 445.0 L264.8 449.9 L265.0 451.7 L265.5 449.2 L265.7 445.9 L266.4 437.0 L267.1 445.9 L267.4 449.2 L267.8 452.0 L268.1 450.4 L268.8 446.0 L269.5 450.4 L269.8 452.0 L270.2 450.1 L270.5 447.4 L271.2 440.0 L271.9 447.4 L272.1 450.1 L272.6 451.4 L272.8 449.4 L273.5 444.2 L273.5 412.0 L275.2 412.0 L275.9 418.7 L276.5 412.0 L277.1 412.0 L278.1 431.0 L278.8 412.0 L278.9 413.8 L280.2 448.6 L282.2 412.0 L282.3 412.0 L283.1 433.0 L283.8 412.0 L284.6 412.0 L285.2 419.1 L285.8 412.0 L286.6 415.1 L287.4 429.3 L288.0 412.0 L288.3 412.0 L289.9 435.5 L291.4 412.0 L291.5 412.0 L292.1 427.0 L292.7 412.0 L293.8 412.0 L294.4 425.2 L295.2 412.0 L296.3 415.6 L297.2 433.4 L297.9 412.0 L298.0 412.0 L299.5 443.3 L301.2 412.0 L301.3 413.7 L301.7 427.2 L302.6 412.0 L303.2 415.9 L303.9 420.5 L304.5 412.0 L305.4 414.8 L306.2 417.7 L306.9 412.0 L307.1 412.0 L308.6 437.3 L310.0 412.0 L310.3 412.0 L310.9 427.9 L311.8 412.0 L313.1 412.0 L313.7 424.9 L314.2 412.0 L315.0 415.9 L315.7 430.3 L316.5 412.0 L316.6 412.0 L318.4 443.1 L320.3 412.0 L320.4 415.8 L320.8 428.6 L321.9 412.0 L322.1 412.0 L322.8 421.4 L323.6 412.0 L324.8 412.0 L325.6 425.5 L326.3 412.0 L326.8 412.0 L328.1 434.8 L329.5 412.0 L329.6 414.3 L330.1 427.7 L331.0 412.0 L332.1 412.0 L332.8 425.6 L333.5 412.0 L334.1 412.0 L335.0 433.7 L335.7 412.0 L335.8 412.0 L337.0 448.2 L339.1 412.0 L339.2 412.0 L339.9 421.3 L340.6 412.0 L341.4 412.0 L342.0 423.4 L342.9 412.0 L343.7 412.0 L344.6 423.8 L345.4 412.0 L345.5 413.7 L346.7 436.2 L347.8 412.0 L348.5 415.5 L349.3 429.3 L350.0 412.0 L350.4 412.0 L350.4 500.0 L349.9 500.0 L349.3 487.6 L348.6 496.3 L348.5 500.0 L346.9 472.4 L345.6 500.0 L345.0 500.0 L344.4 485.6 L343.6 496.0 L342.9 500.0 L342.5 493.6 L341.8 500.0 L340.4 500.0 L339.6 483.2 L339.8 500.0 L339.7 500.0 L337.6 463.2 L335.8 500.0 L335.7 500.0 L334.8 483.9 L334.1 500.0 L333.1 500.0 L332.4 486.2 L331.7 497.9 L331.0 500.0 L330.4 482.8 L329.7 500.0 L329.6 500.0 L327.9 473.5 L326.5 496.0 L326.4 500.0 L325.6 481.7 L324.7 497.4 L323.8 500.0 L323.0 486.4 L322.5 500.0 L321.7 500.0 L320.9 480.6 L320.1 498.9 L320.0 500.0 L318.1 464.3 L316.6 496.2 L316.5 500.0 L315.7 477.1 L315.1 497.2 L314.5 500.0 L313.6 496.0 L312.9 496.1 L311.7 500.0 L311.0 482.2 L310.6 500.0 L310.5 500.0 L309.1 481.8 L307.6 500.0 L307.1 500.0 L306.4 482.7 L305.7 500.0 L305.0 500.0 L304.3 487.3 L303.6 500.0 L302.8 500.0 L302.1 481.9 L301.3 500.0 L301.2 500.0 L299.0 473.9 L297.7 500.0 L297.6 500.0 L296.7 481.9 L295.8 500.0 L295.3 500.0 L294.9 496.0 L294.2 500.0 L292.9 500.0 L292.2 486.3 L291.4 496.5 L291.2 500.0 L290.1 471.8 L288.7 500.0 L288.1 500.0 L287.3 485.1 L286.6 500.0 L285.8 500.0 L285.1 490.7 L284.6 497.3 L283.8 500.0 L283.0 481.9 L282.2 500.0 L282.1 500.0 L280.3 463.8 L278.8 498.2 L278.7 500.0 L278.0 477.9 L276.9 500.0 L276.1 500.0 L275.3 496.0 L274.6 498.5 L273.5 500.0 L273.5 466.2 L272.8 461.4 L272.6 460.3 L272.1 462.3 L271.9 464.9 L271.2 468.2 L270.5 464.4 L270.2 462.3 L269.8 460.0 L269.5 461.0 L268.8 464.1 L268.1 462.0 L267.8 460.2 L267.4 461.8 L267.1 463.8 L266.4 474.3 L265.7 466.3 L265.5 462.1 L265.0 459.3 L264.8 460.9 L264.1 467.8 L263.4 461.3 L263.1 459.3 L262.7 459.8 L262.4 462.3 L261.7 468.4 L261.0 461.0 L260.8 459.6 L260.3 459.6 L260.1 461.5 L259.4 463.9 L258.7 460.1 L258.4 459.4 L258.0 462.0 L257.7 464.5 L257.0 467.5 L256.3 463.8 L256.0 461.9 L255.6 459.4 L255.3 460.1 L254.6 462.4 L253.9 460.9 L253.7 459.5 L253.2 459.7 L253.0 460.7 L252.3 466.4 L251.6 462.3 L251.3 459.9 L250.9 458.1 L250.6 458.8 L249.9 462.4 L249.2 459.2 L249.0 458.1 L248.5 458.5 L248.3 459.8 L247.6 463.3 L246.9 459.1 L246.6 458.4 L246.2 458.6 L245.9 459.8 L245.2 461.4 L244.5 458.9 L244.2 458.5 L243.8 460.9 L243.5 463.0 L242.8 465.3 L242.1 462.3 L241.9 460.9 L241.4 461.4 L241.2 462.9 L240.5 467.1 L239.8 464.1 L239.5 461.5 L239.1 461.1 L238.8 462.7 L238.1 471.0 L237.4 465.0 L237.2 461.4 L236.7 465.3 L236.5 470.6 L235.8 494.3 L235.1 472.6 L234.8 465.6 L234.4 458.7 L234.1 460.2 L233.4 464.4 L232.7 459.5 L232.4 458.6 L232.0 458.6 L231.7 459.8 L231.0 461.5 L230.3 458.9 L230.1 458.4 L229.6 467.0 L229.4 472.6 L228.7 479.3 L228.0 470.7 L227.7 466.7 L227.3 459.8 L227.0 460.7 L226.3 463.1 L225.6 461.4 L225.4 459.9 L224.9 458.1 L224.7 458.4 L224.0 460.6 L223.3 459.3 L223.0 458.3 L222.6 458.1 L222.3 458.8 L221.6 462.4 L220.9 459.3 L220.6 458.2 L220.2 457.9 L219.9 458.8 L219.2 461.3 L218.5 458.4 L218.3 457.8 L217.8 459.1 L217.6 460.8 L216.9 463.4 L216.2 459.6 L215.9 459.0 L215.5 458.6 L215.2 459.3 L214.5 459.9 L213.8 458.9 L213.6 458.5 L213.1 458.8 L212.9 459.4 L212.2 460.7 L211.5 459.8 L211.2 458.9 L210.8 459.6 L210.5 460.4 L209.8 465.1 L209.1 461.9 L208.8 459.8 L208.4 461.0 L208.1 463.4 L207.4 474.9 L206.7 464.8 L206.5 461.2 L206.0 465.3 L205.8 472.1 L205.1 493.3 L204.4 470.2 L204.1 465.0 L203.7 462.6 L203.4 467.0 L202.7 474.8 L202.0 464.3 L201.8 462.2 L201.3 462.5 L201.1 465.8 L200.4 469.5 L199.7 464.3 L199.4 462.3 L199.0 461.5 L198.7 463.3 L198.0 466.8 L197.3 464.0 L196.6 457.1 L196.3 456.9 L195.4 459.2 L194.5 460.4 L193.6 458.8 L192.7 457.2 L191.5 457.1 L190.6 459.0 L189.7 460.1 L188.8 459.3 L187.9 456.9 L186.7 457.2 L185.8 458.0 L184.9 460.3 L184.0 458.0 L183.1 457.3 L182.0 456.9 L181.1 458.7 L180.2 459.3 L179.3 458.5 L178.4 457.1 L177.2 457.2 L176.3 459.3 L175.4 461.3 L174.5 459.6 L173.6 456.9 L172.4 457.2 L171.5 459.3 L170.6 463.5 L169.7 459.1 L168.8 457.3 L167.7 456.9 L166.8 462.0 L165.9 463.8 L165.0 461.7 L164.1 457.0 L162.9 457.2 L162.0 460.3 L161.1 464.5 L160.2 460.9 L159.3 457.0 L158.1 457.1 L157.2 459.1 L156.3 462.2 L155.4 458.8 L154.5 457.3 L153.3 456.9 L152.4 459.3 L151.6 459.8 L150.7 459.3 L149.8 457.0 L148.6 457.3 L147.7 458.1 L146.8 460.0 L145.9 458.3 L145.0 457.1 L143.8 457.0 L142.9 457.9 L142.0 459.0 L141.1 457.7 L140.2 457.3 L139.0 457.0 L138.1 459.3 L137.2 459.8 L136.3 459.3 L135.4 456.9 L134.3 457.3 L133.4 458.8 L132.5 462.3 L131.6 459.0 L130.7 457.1 L129.5 457.0 L128.6 461.0 L127.7 464.3 L126.8 460.4 L125.9 457.2 L123.6 457.1Z" fill="#25282b" stroke="#25282b" stroke-width="0.62" stroke-linejoin="round"/>
<path d="M351.4 142.6 L353.2 142.6 L354.0 160.3 L354.9 142.6 L355.0 142.6 L356.5 179.5 L358.4 142.6 L358.5 142.6 L358.4 159.5 L359.3 142.6 L360.4 142.6 L361.2 156.3 L361.8 142.6 L363.0 142.6 L363.7 157.3 L364.3 142.6 L364.4 142.6 L365.5 172.1 L367.1 142.6 L367.3 142.6 L368.0 161.3 L368.7 142.6 L369.9 142.6 L370.6 149.2 L371.4 142.6 L371.9 142.6 L372.8 156.5 L373.5 142.6 L373.6 142.6 L375.0 176.1 L377.0 142.6 L377.1 142.6 L377.7 161.5 L378.4 142.6 L379.5 142.6 L380.2 150.4 L381.0 142.6 L381.9 142.6 L382.7 151.5 L383.3 142.6 L383.6 145.5 L385.1 164.9 L386.5 142.6 L386.6 142.6 L387.1 160.8 L387.7 142.6 L389.1 142.6 L389.8 146.6 L390.3 142.6 L390.9 142.6 L391.6 158.9 L392.6 142.6 L392.7 142.6 L394.1 177.6 L395.8 142.6 L395.9 142.6 L396.7 156.3 L397.7 142.6 L398.4 142.6 L399.0 146.6 L399.8 142.6 L400.4 142.6 L401.0 154.4 L401.9 142.6 L402.1 142.6 L403.7 168.2 L405.1 142.6 L405.2 144.1 L405.8 158.0 L406.7 142.6 L407.7 142.6 L408.4 148.8 L409.0 142.6 L409.9 142.6 L410.9 161.2 L411.7 142.6 L411.8 142.6 L413.4 176.8 L415.2 142.6 L415.3 142.6 L415.8 162.0 L416.6 142.6 L417.1 142.6 L417.9 150.2 L418.6 142.6 L419.6 142.6 L420.3 150.9 L421.2 142.6 L421.7 142.6 L422.9 164.1 L424.4 142.6 L424.5 146.6 L424.8 156.3 L425.7 142.6 L426.4 142.6 L426.4 230.6 L425.6 230.6 L425.0 214.0 L424.2 230.6 L424.0 230.6 L422.8 203.6 L421.5 227.1 L421.3 230.6 L420.7 214.1 L419.9 230.6 L418.8 230.6 L418.0 222.9 L417.5 230.6 L416.3 230.6 L415.6 212.8 L415.7 228.1 L415.6 230.6 L413.4 199.1 L412.1 230.6 L412.0 230.6 L411.3 210.0 L410.2 228.8 L409.1 230.6 L408.3 226.6 L407.7 230.6 L406.8 230.6 L406.0 218.3 L405.3 229.2 L405.0 230.6 L403.7 201.0 L402.4 230.6 L402.3 230.6 L401.6 214.0 L400.9 227.9 L399.6 230.6 L399.0 217.5 L398.3 230.6 L397.1 230.6 L396.5 212.1 L396.2 230.6 L396.1 230.6 L394.3 195.8 L392.7 230.6 L392.6 230.6 L391.7 220.4 L391.1 230.6 L389.9 230.6 L389.3 221.7 L388.6 230.6 L388.2 230.6 L387.3 215.6 L386.5 230.6 L385.8 230.6 L384.6 206.8 L383.3 230.6 L383.2 230.6 L382.6 216.3 L381.8 230.6 L380.9 230.6 L380.2 217.6 L379.3 227.0 L378.3 230.6 L377.4 212.2 L377.1 227.5 L377.0 230.6 L375.1 196.3 L373.9 228.8 L373.8 230.6 L373.0 211.5 L372.3 230.6 L371.3 230.6 L370.6 219.9 L369.9 230.6 L369.1 230.6 L368.3 212.5 L367.7 230.6 L367.3 230.6 L365.6 203.5 L364.3 229.1 L363.9 230.6 L363.1 215.5 L362.4 230.6 L361.6 230.6 L361.1 218.9 L360.4 230.6 L359.6 230.6 L358.6 221.2 L358.4 230.6 L358.3 230.6 L356.3 194.4 L355.0 230.6 L354.9 230.6 L354.1 214.6 L353.3 230.6 L351.4 230.6Z" fill="#c01a62" stroke="#3a0820" stroke-width="0.62" stroke-linejoin="round"/>
<path d="M351.4 412.0 L353.4 415.1 L354.0 434.1 L354.9 412.0 L355.0 412.0 L356.5 447.1 L358.2 412.0 L358.3 412.0 L358.8 434.1 L359.8 412.0 L360.8 412.0 L361.3 423.5 L361.9 412.0 L362.4 412.0 L363.3 427.7 L364.0 412.0 L364.4 412.0 L365.8 440.9 L367.4 412.0 L367.7 412.0 L368.4 429.0 L369.1 412.0 L370.1 414.0 L370.7 418.0 L371.2 412.0 L372.3 415.2 L372.9 433.3 L373.7 412.0 L373.8 412.0 L375.5 439.9 L377.3 412.0 L377.4 413.4 L377.7 431.4 L378.6 412.0 L379.0 414.8 L379.8 422.7 L380.6 412.0 L381.7 412.0 L382.6 426.8 L383.3 412.0 L383.4 414.9 L384.8 440.7 L386.1 412.0 L386.4 412.0 L387.1 430.8 L387.9 412.0 L388.5 413.2 L389.2 419.8 L390.0 412.0 L391.3 414.1 L392.0 433.8 L392.9 412.0 L393.0 412.0 L394.3 440.0 L396.2 412.0 L396.3 412.0 L396.3 428.4 L397.2 412.0 L398.1 412.0 L398.7 421.3 L399.4 412.0 L400.4 412.0 L401.1 426.5 L401.9 412.0 L402.0 412.0 L403.4 434.2 L404.9 412.0 L405.2 412.0 L405.9 426.5 L406.8 412.0 L407.7 412.0 L408.4 416.0 L409.0 412.0 L410.2 412.0 L411.0 433.5 L411.8 412.0 L411.9 414.7 L413.2 443.8 L415.0 412.0 L415.1 412.0 L415.4 431.6 L416.3 412.0 L417.2 412.0 L417.8 423.7 L418.7 412.0 L419.6 412.0 L420.6 430.5 L421.3 412.0 L421.4 412.0 L422.7 435.8 L423.9 412.0 L424.6 412.0 L425.3 424.0 L426.0 412.0 L426.4 412.0 L426.4 500.0 L426.2 500.0 L425.4 485.0 L424.6 500.0 L424.4 500.0 L423.1 473.4 L421.5 498.2 L421.0 500.0 L420.4 486.6 L419.6 500.0 L418.9 500.0 L418.0 487.4 L417.4 500.0 L416.2 500.0 L415.5 477.2 L415.0 498.6 L414.9 500.0 L413.1 463.4 L411.8 500.0 L411.7 500.0 L410.9 490.6 L410.0 500.0 L409.4 500.0 L408.9 492.0 L408.2 500.0 L407.2 500.0 L406.2 487.8 L405.6 500.0 L405.4 500.0 L404.0 477.6 L402.4 500.0 L402.3 500.0 L401.6 488.0 L400.7 500.0 L399.5 500.0 L399.0 488.3 L398.3 500.0 L397.8 500.0 L396.8 480.0 L396.2 500.0 L396.1 500.0 L394.0 465.9 L392.4 500.0 L392.3 500.0 L391.7 478.4 L390.9 500.0 L390.4 500.0 L389.5 496.0 L388.8 500.0 L387.7 500.0 L386.9 481.6 L386.3 500.0 L386.0 500.0 L384.7 472.3 L383.1 500.0 L382.9 500.0 L382.3 485.4 L381.5 496.5 L380.6 500.0 L380.1 493.0 L379.5 500.0 L378.6 500.0 L377.6 486.0 L377.1 500.0 L377.0 500.0 L375.2 473.1 L373.7 498.5 L373.6 500.0 L372.7 477.4 L372.0 500.0 L371.1 500.0 L370.3 492.6 L369.8 499.0 L369.0 500.0 L368.5 481.1 L367.7 497.9 L367.1 500.0 L365.7 472.3 L364.3 496.3 L364.2 500.0 L363.5 486.4 L362.8 500.0 L361.8 500.0 L361.0 488.8 L360.3 500.0 L359.7 500.0 L358.8 478.3 L358.2 500.0 L358.1 500.0 L356.0 468.0 L354.7 500.0 L354.6 500.0 L353.7 478.9 L352.9 500.0 L351.4 500.0Z" fill="#c01a62" stroke="#3a0820" stroke-width="0.62" stroke-linejoin="round"/>
<path d="M427.4 142.6 L429.2 145.7 L430.0 160.0 L431.0 142.6 L431.1 142.6 L432.2 176.6 L434.0 142.6 L434.1 142.6 L434.8 159.5 L435.5 142.6 L436.1 142.6 L436.7 154.3 L437.3 142.6 L438.5 142.6 L439.4 157.1 L440.1 142.6 L440.7 143.8 L441.9 164.9 L443.3 142.6 L443.4 145.3 L444.0 158.0 L444.8 142.6 L446.0 143.7 L446.7 156.4 L447.5 142.6 L448.3 144.6 L449.2 163.4 L449.8 142.6 L449.9 142.6 L450.9 174.1 L452.7 142.6 L453.1 142.6 L453.9 163.3 L454.7 142.6 L455.0 146.2 L455.7 149.3 L456.5 142.6 L457.7 142.6 L458.4 150.7 L459.3 142.6 L459.5 145.8 L460.9 166.0 L462.4 142.6 L462.5 142.6 L462.9 158.1 L463.8 142.6 L465.0 142.6 L465.6 155.6 L466.3 142.6 L467.1 142.6 L467.9 164.8 L468.6 142.6 L468.8 145.5 L470.4 176.2 L472.2 142.6 L472.3 143.7 L472.5 159.6 L473.3 142.6 L474.1 142.6 L474.8 149.4 L475.3 142.6 L476.8 142.6 L477.6 160.9 L478.3 142.6 L478.4 142.6 L479.4 167.8 L480.8 142.6 L481.5 142.6 L482.3 160.4 L483.0 142.6 L483.6 142.6 L484.4 149.5 L485.1 142.6 L486.4 145.8 L487.2 164.5 L487.9 142.6 L488.0 143.8 L489.0 176.7 L490.8 142.6 L490.9 144.2 L491.5 158.3 L492.2 142.6 L493.4 142.6 L494.2 153.2 L494.9 142.6 L495.9 146.1 L496.5 160.9 L497.3 142.6 L497.5 144.3 L499.1 172.5 L500.4 142.6 L500.5 142.6 L501.2 159.1 L501.9 142.6 L502.3 142.6 L502.3 230.6 L501.9 230.6 L501.2 216.6 L500.4 230.6 L500.3 230.6 L499.0 202.5 L497.3 230.6 L497.1 230.6 L496.5 212.4 L495.7 230.6 L494.8 230.6 L494.2 221.1 L493.3 228.4 L492.4 230.6 L491.6 209.9 L491.0 228.7 L490.9 230.6 L488.9 199.0 L487.5 230.6 L487.4 230.6 L486.7 208.8 L485.9 230.6 L485.3 230.6 L484.5 217.1 L483.9 230.6 L482.6 230.6 L481.7 216.2 L481.4 230.6 L481.3 230.6 L479.7 204.7 L478.4 230.6 L478.1 230.6 L477.2 216.6 L476.5 230.6 L475.6 230.6 L475.0 219.3 L474.3 228.4 L473.7 230.6 L472.8 219.6 L472.4 228.5 L472.3 230.6 L470.2 195.4 L468.5 230.6 L468.4 230.6 L467.6 209.9 L466.9 230.6 L466.1 230.6 L465.4 220.9 L464.5 230.6 L463.6 230.6 L463.0 217.2 L462.2 230.6 L462.1 230.6 L460.6 207.7 L459.2 228.0 L458.9 230.6 L458.3 214.3 L457.4 230.6 L456.7 230.6 L456.1 218.6 L455.5 230.6 L454.4 230.6 L453.7 208.5 L453.1 230.6 L453.0 230.6 L451.0 203.4 L449.9 230.6 L449.8 230.6 L448.9 207.7 L448.2 230.6 L447.2 230.6 L446.7 221.7 L445.9 230.6 L444.8 230.6 L444.2 213.4 L443.3 230.6 L443.2 230.6 L441.8 207.0 L440.3 230.6 L440.2 230.6 L439.5 222.4 L438.7 230.6 L437.5 230.6 L436.8 217.4 L436.0 227.3 L435.4 230.6 L434.5 211.9 L434.2 230.6 L434.1 230.6 L432.3 198.5 L430.7 228.7 L430.6 230.6 L429.8 212.6 L428.9 230.6 L427.4 230.6Z" fill="#25282b" stroke="#25282b" stroke-width="0.62" stroke-linejoin="round"/>
<path d="M427.4 412.0 L429.3 412.0 L429.9 434.6 L430.9 412.0 L431.0 412.0 L432.4 445.0 L434.3 412.0 L434.4 412.0 L434.7 427.6 L435.5 412.0 L436.5 412.0 L437.1 419.5 L437.6 412.0 L438.7 415.6 L439.3 428.9 L440.2 412.0 L440.3 412.0 L441.6 431.7 L443.2 412.0 L443.4 412.0 L444.4 427.4 L445.1 412.0 L446.1 412.0 L446.7 418.2 L447.5 412.0 L447.9 412.0 L448.8 431.9 L449.7 412.0 L449.8 413.9 L451.3 443.7 L453.1 412.0 L453.2 415.3 L453.8 429.8 L454.5 412.0 L455.5 412.0 L456.1 416.0 L456.9 412.0 L457.6 412.0 L458.5 427.2 L459.1 412.0 L459.2 412.0 L460.4 436.2 L461.7 412.0 L462.3 412.0 L463.0 430.1 L463.9 412.0 L464.7 412.0 L465.4 422.2 L466.0 412.0 L466.7 412.0 L467.4 421.6 L468.4 412.0 L468.5 412.0 L470.3 445.7 L472.0 412.0 L472.1 414.0 L472.4 434.0 L473.4 412.0 L474.1 412.0 L474.9 418.7 L475.4 412.0 L476.8 414.0 L477.8 426.5 L478.4 412.0 L478.5 412.0 L479.7 437.0 L481.0 412.0 L481.4 414.7 L482.2 425.1 L482.8 412.0 L484.1 415.6 L484.6 421.6 L485.2 412.0 L486.2 412.0 L487.0 431.5 L488.0 412.0 L488.1 412.0 L489.2 443.8 L491.0 412.0 L491.1 412.0 L491.4 434.8 L492.3 412.0 L493.4 415.0 L494.1 424.0 L494.7 412.0 L495.7 412.0 L496.5 426.6 L497.2 412.0 L497.3 412.0 L498.4 434.4 L499.7 412.0 L500.2 415.4 L500.8 424.1 L501.6 412.0 L502.3 412.0 L502.3 500.0 L501.7 500.0 L500.9 494.9 L500.2 500.0 L500.1 500.0 L498.7 477.9 L497.6 500.0 L496.9 500.0 L496.3 487.5 L495.6 500.0 L494.9 500.0 L494.1 487.2 L493.5 500.0 L492.2 500.0 L491.3 483.3 L491.4 500.0 L491.3 500.0 L489.5 466.9 L487.7 500.0 L487.4 500.0 L486.6 477.5 L485.9 500.0 L485.0 500.0 L484.3 493.1 L483.7 500.0 L483.0 500.0 L482.3 485.4 L481.4 500.0 L480.9 500.0 L479.7 471.4 L478.5 500.0 L478.4 500.0 L477.8 482.4 L476.9 500.0 L475.4 500.0 L474.8 486.4 L474.1 500.0 L473.5 500.0 L472.5 483.6 L472.3 498.7 L472.2 500.0 L470.4 466.2 L469.0 496.1 L468.9 500.0 L468.2 483.5 L467.4 500.0 L466.3 500.0 L465.7 486.8 L465.1 500.0 L463.7 500.0 L462.9 489.0 L462.5 500.0 L462.4 500.0 L460.9 476.8 L459.4 500.0 L459.1 500.0 L458.3 485.4 L457.4 500.0 L456.5 500.0 L456.1 492.2 L455.3 500.0 L454.6 500.0 L453.9 481.8 L453.5 500.0 L453.4 500.0 L451.3 464.2 L449.9 498.7 L449.8 500.0 L449.0 482.0 L448.4 498.3 L447.4 500.0 L446.8 496.0 L446.1 497.3 L445.0 500.0 L444.3 485.3 L443.5 500.0 L443.4 500.0 L441.8 478.3 L440.4 500.0 L439.8 500.0 L439.1 486.8 L438.3 496.6 L437.9 500.0 L437.0 493.8 L436.3 496.8 L435.3 500.0 L434.6 490.1 L434.2 500.0 L434.1 500.0 L432.1 463.6 L430.5 497.7 L430.4 500.0 L429.8 487.2 L429.0 497.8 L427.4 500.0Z" fill="#25282b" stroke="#25282b" stroke-width="0.62" stroke-linejoin="round"/>
<path d="M503.3 142.6 L505.0 142.6 L505.7 159.1 L506.6 142.6 L506.7 142.6 L508.6 175.2 L510.5 142.6 L510.6 146.0 L510.6 163.9 L511.4 142.6 L512.5 142.6 L513.3 153.7 L513.8 142.6 L514.6 145.7 L515.4 155.5 L516.0 142.6 L516.4 142.6 L517.9 169.8 L519.3 142.6 L519.4 142.6 L520.4 157.2 L521.1 142.6 L522.0 142.6 L522.6 146.6 L523.1 142.6 L524.3 145.2 L525.0 165.2 L525.9 142.6 L526.0 144.9 L527.5 175.6 L529.2 142.6 L529.3 142.6 L529.6 163.8 L530.5 142.6 L531.6 142.6 L532.2 149.1 L532.9 142.6 L533.4 142.6 L534.1 149.9 L534.8 142.6 L535.5 142.6 L536.9 167.4 L538.3 142.6 L538.5 142.6 L539.4 157.4 L540.1 142.6 L540.7 144.2 L541.5 152.2 L542.2 142.6 L542.9 142.6 L543.9 165.4 L544.7 142.6 L544.8 142.6 L546.3 177.7 L548.0 142.6 L548.1 145.2 L548.6 153.6 L549.2 142.6 L550.6 142.6 L551.0 149.2 L551.8 142.6 L552.2 142.6 L553.1 159.9 L553.9 142.6 L554.4 142.6 L555.8 172.3 L557.3 142.6 L557.5 142.6 L558.0 156.1 L558.9 142.6 L559.7 142.6 L560.6 153.1 L561.1 142.6 L561.9 142.6 L562.9 164.5 L563.7 142.6 L563.8 142.6 L565.4 171.2 L567.4 142.6 L567.5 142.6 L567.3 159.7 L568.1 142.6 L569.0 142.6 L569.8 150.3 L570.4 142.6 L571.6 143.6 L572.4 160.7 L573.3 142.6 L573.4 142.6 L574.5 164.8 L575.9 142.6 L576.0 142.6 L576.6 161.0 L577.5 142.6 L578.3 142.6 L578.3 230.6 L577.6 230.6 L576.8 216.5 L576.3 230.6 L576.2 230.6 L575.0 207.9 L573.4 230.6 L573.2 230.6 L572.5 213.9 L571.6 230.6 L570.3 230.6 L569.8 222.9 L569.1 228.3 L568.3 230.6 L567.3 213.5 L567.2 230.6 L567.1 230.6 L564.9 199.3 L563.5 230.6 L563.4 230.6 L562.6 212.5 L561.7 230.6 L561.2 230.6 L560.6 218.8 L559.8 227.3 L558.9 230.6 L558.3 218.5 L557.4 230.6 L557.3 230.6 L555.8 206.2 L554.5 227.0 L554.0 230.6 L553.2 217.6 L552.6 230.6 L551.6 230.6 L550.9 223.7 L550.1 230.6 L549.3 230.6 L548.5 210.5 L548.6 230.6 L548.5 230.6 L546.4 195.8 L544.9 228.4 L544.8 230.6 L544.0 211.6 L543.3 228.7 L541.7 230.6 L541.3 222.2 L540.6 229.5 L539.9 230.6 L539.0 215.1 L538.5 230.6 L538.4 230.6 L536.8 202.6 L535.6 230.6 L535.3 230.6 L534.7 215.1 L533.9 227.4 L532.5 230.6 L531.8 219.1 L531.3 230.6 L530.5 230.6 L529.8 212.5 L529.1 230.6 L529.0 230.6 L526.9 197.0 L525.7 230.6 L525.6 230.6 L524.9 210.7 L524.2 230.6 L523.4 230.6 L522.5 223.8 L521.9 230.6 L520.8 230.6 L520.1 217.8 L519.2 230.6 L518.7 230.6 L517.5 202.9 L516.3 228.6 L516.2 230.6 L515.4 216.0 L514.7 230.6 L513.5 230.6 L513.0 221.8 L512.2 230.6 L511.6 230.6 L510.7 219.9 L509.9 228.9 L509.7 230.6 L507.9 197.5 L506.6 228.2 L506.5 230.6 L505.6 209.7 L505.0 228.2 L503.3 230.6Z" fill="#c01a62" stroke="#3a0820" stroke-width="0.62" stroke-linejoin="round"/>
<path d="M503.3 412.0 L504.7 412.0 L505.5 432.6 L506.4 412.0 L506.5 412.0 L508.4 447.4 L510.0 412.0 L510.1 412.0 L510.5 421.2 L511.2 412.0 L511.9 412.0 L512.5 421.0 L513.4 412.0 L514.6 412.0 L515.3 429.8 L516.1 412.0 L516.2 412.0 L517.4 441.3 L518.9 412.0 L519.2 412.0 L520.0 424.2 L520.7 412.0 L521.7 412.0 L522.4 423.2 L523.2 412.0 L523.8 412.0 L524.7 430.2 L525.5 412.0 L525.6 412.0 L527.2 445.4 L529.1 412.0 L529.2 412.0 L529.2 424.0 L530.0 412.0 L531.2 412.0 L531.9 420.1 L532.8 412.0 L533.5 412.0 L534.4 430.8 L535.2 412.0 L535.3 414.2 L536.6 438.8 L537.9 412.0 L538.4 412.0 L539.2 426.2 L540.0 412.0 L540.8 412.0 L541.6 425.6 L542.2 412.0 L542.9 412.0 L543.7 433.6 L544.3 412.0 L544.4 412.0 L545.9 445.1 L547.8 412.0 L547.9 412.0 L548.4 430.8 L549.3 412.0 L550.3 413.7 L551.2 422.9 L551.9 412.0 L552.5 412.0 L553.3 426.5 L553.9 412.0 L554.4 412.0 L555.8 435.7 L557.1 412.0 L557.4 412.0 L558.0 428.0 L558.8 412.0 L559.6 412.0 L560.2 424.4 L560.8 412.0 L562.2 412.0 L563.0 429.9 L563.8 412.0 L563.9 412.0 L565.0 440.8 L567.0 412.0 L567.1 413.5 L567.3 434.5 L568.3 412.0 L569.2 412.0 L569.8 418.8 L570.6 412.0 L571.4 412.0 L572.2 427.8 L572.9 412.0 L573.2 412.0 L574.6 439.2 L575.9 412.0 L576.2 415.2 L576.8 429.5 L577.8 412.0 L578.3 412.0 L578.3 500.0 L577.9 500.0 L577.2 483.6 L576.4 500.0 L576.2 500.0 L575.0 471.2 L573.6 500.0 L572.9 500.0 L572.2 483.7 L571.3 497.9 L570.8 500.0 L570.1 487.9 L569.2 500.0 L568.4 500.0 L567.7 477.7 L567.4 500.0 L567.3 500.0 L565.3 468.4 L563.8 500.0 L563.7 500.0 L562.8 480.9 L561.9 500.0 L560.8 500.0 L560.2 491.4 L559.7 500.0 L558.5 500.0 L557.7 481.2 L557.0 500.0 L556.9 500.0 L555.4 474.8 L554.1 500.0 L554.0 500.0 L553.3 482.6 L552.5 500.0 L551.4 500.0 L550.8 489.6 L550.1 497.0 L549.6 500.0 L549.0 489.3 L548.2 497.9 L548.1 500.0 L546.4 464.8 L544.7 499.0 L544.6 500.0 L543.8 477.4 L542.9 500.0 L541.9 500.0 L541.3 488.6 L540.7 497.3 L539.7 500.0 L539.1 485.7 L538.2 498.5 L538.1 500.0 L536.5 476.2 L535.1 500.0 L535.0 500.0 L534.3 484.4 L533.7 496.2 L532.8 500.0 L532.0 496.0 L531.3 500.0 L530.6 500.0 L529.6 483.3 L529.1 500.0 L529.0 500.0 L527.3 468.2 L525.8 498.5 L525.7 500.0 L525.1 483.8 L524.2 500.0 L523.3 500.0 L522.4 486.4 L521.8 500.0 L520.8 500.0 L520.1 487.0 L519.5 500.0 L518.7 500.0 L517.3 476.5 L516.2 500.0 L516.1 500.0 L515.6 482.9 L514.7 500.0 L513.5 500.0 L512.8 492.1 L512.1 500.0 L511.6 500.0 L510.6 490.6 L509.9 500.0 L509.7 500.0 L507.9 465.4 L507.0 500.0 L506.9 500.0 L506.1 482.8 L505.3 498.5 L503.3 500.0Z" fill="#c01a62" stroke="#3a0820" stroke-width="0.62" stroke-linejoin="round"/>
<path d="M579.3 142.6 L580.9 142.6 L581.6 154.4 L582.6 142.6 L582.7 142.6 L584.1 159.4 L585.8 142.6 L586.0 145.9 L586.6 153.7 L587.5 142.6 L588.1 142.6 L588.6 147.1 L589.3 142.6 L590.3 142.6 L591.1 150.2 L591.8 142.6 L592.0 142.6 L593.5 160.5 L595.0 142.6 L595.4 144.6 L596.2 155.4 L597.0 142.6 L597.4 145.0 L598.2 150.6 L599.0 142.6 L599.9 142.6 L600.9 157.0 L601.7 142.6 L601.8 142.6 L602.9 166.9 L605.0 142.6 L605.1 142.6 L605.6 156.9 L606.3 142.6 L607.3 142.6 L608.0 149.1 L608.8 142.6 L609.3 142.6 L609.9 154.0 L610.8 142.6 L611.3 143.9 L612.8 162.4 L614.3 142.6 L614.4 142.6 L615.1 155.0 L615.8 142.6 L616.4 142.6 L617.1 147.1 L617.9 142.6 L619.1 144.3 L619.7 157.9 L620.5 142.6 L620.6 142.6 L622.3 165.1 L624.1 142.6 L624.2 145.7 L624.5 149.9 L625.2 142.6 L626.4 142.6 L627.0 145.3 L627.6 142.6 L628.7 142.6 L629.5 154.6 L630.1 142.6 L630.2 142.6 L631.6 157.6 L633.0 142.6 L633.3 142.6 L634.0 152.2 L634.8 142.6 L635.9 144.4 L636.5 147.2 L637.3 142.6 L637.8 146.1 L638.6 156.7 L639.3 142.6 L639.5 142.6 L641.3 165.2 L643.2 142.6 L643.3 144.7 L643.2 154.2 L644.2 142.6 L645.1 142.6 L645.9 145.3 L646.4 142.6 L647.5 144.8 L648.3 149.0 L648.9 142.6 L649.1 142.6 L650.4 162.3 L651.8 142.6 L652.2 142.6 L653.0 153.6 L653.6 142.6 L654.2 142.6 L654.2 230.6 L652.2 230.6 L650.6 215.2 L649.2 230.6 L648.9 230.6 L648.2 220.7 L647.3 227.1 L646.4 230.6 L645.7 225.1 L644.9 230.6 L644.3 230.6 L643.6 219.2 L643.1 230.6 L643.0 230.6 L641.4 209.2 L639.7 226.7 L639.6 230.6 L638.7 217.7 L637.8 230.6 L636.8 230.6 L636.0 222.2 L635.5 229.6 L634.5 230.6 L633.8 219.4 L633.1 230.6 L632.8 230.6 L631.3 215.2 L629.9 230.6 L629.8 230.6 L628.9 219.5 L628.2 229.6 L627.7 230.6 L627.0 223.4 L626.6 228.6 L625.4 230.6 L624.6 217.6 L624.4 230.6 L624.3 230.6 L622.2 208.2 L620.5 230.6 L620.4 230.6 L619.7 217.7 L618.8 230.6 L617.8 230.6 L617.4 221.6 L616.7 229.3 L615.6 230.6 L614.8 220.4 L614.1 230.6 L613.8 230.6 L612.7 211.5 L611.2 226.7 L610.9 230.6 L610.1 219.3 L609.3 230.6 L608.7 230.6 L607.9 222.0 L607.2 230.6 L606.5 230.6 L605.7 218.3 L604.8 230.6 L604.6 230.6 L603.0 205.5 L601.4 228.8 L601.3 230.6 L600.6 217.5 L599.7 228.2 L599.3 230.6 L598.7 223.2 L597.8 230.6 L596.9 230.6 L596.3 222.2 L595.6 230.6 L595.1 230.6 L593.6 217.9 L592.3 230.6 L591.8 230.6 L590.9 227.2 L590.2 227.6 L589.5 230.6 L588.8 221.7 L587.9 229.0 L587.5 230.6 L586.8 219.3 L586.0 228.2 L585.9 230.6 L583.9 206.6 L582.4 230.6 L582.3 230.6 L581.5 219.0 L580.7 229.3 L579.3 230.6Z" fill="#7a4ea4" stroke="#2c1840" stroke-width="0.62" stroke-linejoin="round"/>
<path d="M579.3 412.0 L580.7 415.7 L581.4 424.2 L582.2 412.0 L582.3 415.4 L583.8 434.4 L585.8 412.0 L585.9 412.0 L586.1 423.7 L587.0 412.0 L587.9 412.0 L588.6 419.5 L589.4 412.0 L590.5 412.0 L591.4 424.3 L592.2 412.0 L592.4 413.7 L593.6 431.2 L594.9 412.0 L595.3 412.0 L596.1 423.9 L596.7 412.0 L597.8 412.0 L598.4 420.6 L598.9 412.0 L599.7 412.0 L600.6 423.6 L601.4 412.0 L601.5 412.0 L603.0 436.7 L605.0 412.0 L605.1 412.0 L605.8 423.7 L606.5 412.0 L607.2 412.0 L607.9 417.4 L608.6 412.0 L609.8 412.0 L610.7 423.5 L611.3 412.0 L611.4 412.0 L612.8 427.3 L614.3 412.0 L614.5 412.0 L615.3 420.5 L615.9 412.0 L616.9 412.0 L617.7 419.6 L618.4 412.0 L618.9 412.0 L619.6 427.2 L620.4 412.0 L620.5 412.0 L622.2 436.4 L624.0 412.0 L624.1 412.0 L624.7 425.2 L625.4 412.0 L626.2 412.0 L626.8 420.3 L627.6 412.0 L628.6 412.0 L629.5 420.1 L630.0 412.0 L630.3 412.0 L631.6 429.2 L633.0 412.0 L633.1 414.0 L633.8 418.0 L634.6 412.0 L635.9 412.0 L636.5 419.4 L637.3 412.0 L638.2 412.0 L639.1 424.9 L639.8 412.0 L639.9 414.7 L641.0 437.0 L642.7 412.0 L642.8 412.0 L643.6 427.0 L644.4 412.0 L645.0 413.1 L645.7 420.6 L646.6 412.0 L647.4 413.3 L648.1 421.4 L648.8 412.0 L649.5 412.0 L650.7 430.7 L652.0 412.0 L652.2 412.0 L653.2 420.6 L653.9 412.0 L654.2 412.0 L654.2 500.0 L653.4 500.0 L652.7 490.3 L652.1 500.0 L652.0 500.0 L650.5 485.9 L649.3 497.5 L648.7 500.0 L647.9 487.9 L647.3 496.9 L646.3 500.0 L645.7 494.3 L645.2 500.0 L644.5 500.0 L643.8 484.8 L643.3 500.0 L643.2 500.0 L641.1 476.0 L639.8 496.0 L639.7 500.0 L638.8 484.4 L638.1 500.0 L637.0 500.0 L636.1 492.6 L635.5 500.0 L634.8 500.0 L634.1 495.1 L633.4 497.9 L633.3 500.0 L631.9 481.7 L630.5 500.0 L630.0 500.0 L629.1 488.7 L628.5 498.8 L627.8 500.0 L627.1 491.9 L626.3 497.9 L625.5 500.0 L624.8 487.4 L624.0 500.0 L623.8 500.0 L621.9 476.2 L620.9 500.0 L620.8 500.0 L620.1 488.8 L619.1 500.0 L617.8 500.0 L617.0 492.6 L616.4 500.0 L616.0 500.0 L615.4 490.9 L614.5 500.0 L614.0 500.0 L612.4 482.3 L611.0 500.0 L610.9 500.0 L610.3 489.5 L609.5 500.0 L608.3 500.0 L607.6 491.8 L607.0 500.0 L606.2 500.0 L605.5 488.0 L605.3 497.2 L605.2 500.0 L603.0 477.3 L601.7 500.0 L601.6 500.0 L600.9 488.2 L600.0 500.0 L599.0 500.0 L598.3 491.3 L597.6 497.9 L596.7 500.0 L595.9 488.8 L595.4 500.0 L595.3 500.0 L593.9 480.3 L592.4 500.0 L591.8 500.0 L591.0 491.4 L590.4 497.1 L589.5 500.0 L588.8 495.8 L588.3 498.2 L587.4 500.0 L586.6 487.0 L585.9 498.5 L585.8 500.0 L583.9 477.9 L582.4 500.0 L582.3 500.0 L581.7 487.7 L580.8 500.0 L579.3 500.0Z" fill="#7a4ea4" stroke="#2c1840" stroke-width="0.62" stroke-linejoin="round"/>
<path d="M655.2 185.4 L656.6 185.4 L657.6 181.0 L658.6 176.6 L659.6 181.0 L660.6 185.4 L661.4 185.4 L662.4 183.5 L663.4 181.6 L664.4 183.5 L665.4 185.4 L666.1 185.4 L667.1 184.0 L668.1 182.6 L669.1 184.0 L670.1 185.4 L670.9 185.4 L671.9 184.5 L672.9 183.6 L673.9 184.5 L674.9 185.4 L675.6 185.4 L676.6 184.5 L677.6 183.6 L678.6 184.5 L679.6 185.4 L680.4 185.4 L681.4 184.0 L682.4 182.6 L683.4 184.0 L684.4 185.4 L685.1 185.4 L686.1 184.0 L687.1 182.6 L688.1 184.0 L689.1 185.4 L691.1 185.4 L691.9 175.5 L692.6 165.6 L693.4 175.5 L693.5 177.5 L694.1 180.3 L694.2 179.0 L695.0 172.6 L695.8 179.0 L695.9 180.3 L696.5 179.5 L696.6 178.0 L697.4 170.6 L698.1 178.0 L698.3 179.5 L698.9 181.5 L699.0 180.5 L699.8 175.6 L700.5 180.5 L700.7 181.5 L701.3 181.1 L701.5 180.0 L702.2 174.6 L703.0 180.0 L703.1 181.1 L703.7 182.3 L703.9 181.5 L704.6 177.6 L705.4 181.5 L705.5 182.3 L706.1 181.9 L706.2 181.0 L707.0 176.6 L707.8 181.0 L707.9 181.9 L708.5 182.7 L708.6 182.0 L709.4 178.6 L710.1 182.0 L710.3 182.7 L710.9 182.3 L711.0 181.5 L711.8 177.6 L712.5 181.5 L712.7 182.3 L713.3 182.7 L713.5 182.0 L714.2 178.6 L715.0 182.0 L715.1 182.7 L715.7 182.7 L715.9 182.0 L716.6 178.6 L717.4 182.0 L717.5 182.7 L718.1 182.3 L718.2 181.5 L719.0 177.6 L719.8 181.5 L719.9 182.3 L720.5 181.9 L720.6 181.0 L721.4 176.6 L722.1 181.0 L722.3 181.9 L722.9 182.3 L723.0 181.5 L723.8 177.6 L724.5 181.5 L724.7 182.3 L725.3 181.5 L725.5 180.5 L726.2 175.6 L727.0 180.5 L727.1 181.5 L727.7 180.7 L727.9 179.5 L728.6 173.6 L729.4 179.5 L729.5 180.7 L730.1 181.1 L730.2 180.4 L730.2 193.3 L730.1 192.5 L729.5 191.6 L729.4 192.2 L728.6 198.9 L727.9 193.8 L727.7 192.2 L727.1 190.5 L727.0 191.4 L726.2 198.4 L725.5 191.8 L725.3 190.6 L724.7 190.3 L724.5 191.4 L723.8 195.8 L723.0 190.5 L722.9 190.0 L722.3 191.5 L722.1 192.6 L721.4 195.1 L720.6 191.5 L720.5 191.0 L719.9 191.2 L719.8 191.8 L719.0 193.4 L718.2 191.9 L718.1 191.2 L717.5 190.2 L717.4 190.5 L716.6 193.5 L715.9 191.5 L715.7 190.6 L715.1 189.6 L715.0 190.1 L714.2 194.9 L713.5 190.8 L713.3 189.9 L712.7 190.1 L712.5 191.0 L711.8 196.2 L711.0 190.5 L710.9 189.9 L710.3 190.4 L710.1 191.4 L709.4 194.0 L708.6 190.3 L708.5 190.0 L707.9 191.7 L707.8 192.6 L707.0 194.4 L706.2 192.0 L706.1 191.5 L705.5 190.9 L705.4 191.3 L704.6 193.8 L703.9 192.1 L703.7 191.2 L703.1 191.1 L703.0 191.7 L702.2 198.2 L701.5 193.2 L701.3 191.7 L700.7 190.5 L700.5 191.5 L699.8 198.5 L699.0 191.6 L698.9 190.6 L698.3 193.0 L698.1 194.9 L697.4 202.6 L696.6 193.2 L696.5 192.3 L695.9 193.3 L695.8 194.8 L695.0 198.2 L694.2 193.4 L694.1 192.7 L693.5 196.2 L693.4 197.7 L692.6 202.6 L691.9 198.3 L691.1 187.7 L689.1 187.7 L688.1 189.0 L687.1 190.3 L686.1 189.0 L685.1 187.7 L684.4 187.6 L683.4 189.3 L682.4 189.7 L681.4 189.3 L680.4 187.5 L679.6 187.9 L678.6 188.2 L677.6 189.8 L676.6 188.2 L675.6 187.9 L674.9 187.7 L673.9 188.6 L672.9 189.3 L671.9 188.6 L670.9 187.7 L670.1 187.6 L669.1 189.3 L668.1 189.8 L667.1 189.3 L666.1 187.6 L665.4 187.9 L664.4 189.0 L663.4 192.0 L662.4 189.0 L661.4 187.9 L660.6 187.6 L659.6 192.1 L658.6 195.2 L657.6 192.0 L656.6 187.6 L655.2 187.9Z" fill="#d02228" stroke="#4a080c" stroke-width="0.62" stroke-linejoin="round"/>
<path d="M655.2 454.8 L656.7 454.8 L657.6 449.4 L658.6 444.0 L659.5 449.4 L660.5 454.8 L661.5 454.8 L662.4 452.9 L663.4 451.0 L664.3 452.9 L665.2 454.8 L666.2 454.8 L667.1 453.4 L668.1 452.0 L669.0 453.4 L670.0 454.8 L671.0 454.8 L671.9 453.7 L672.9 452.5 L673.8 453.6 L674.8 454.8 L675.7 454.8 L676.6 453.4 L677.6 452.0 L678.5 453.4 L679.5 454.8 L680.5 454.8 L681.4 452.4 L682.4 450.0 L683.3 452.4 L684.2 454.8 L685.2 454.8 L686.1 452.9 L687.1 451.0 L688.0 452.9 L689.0 454.8 L690.0 454.8 L690.9 450.4 L691.9 446.0 L692.8 450.4 L693.8 454.8 L694.7 454.8 L695.6 451.9 L695.9 451.2 L696.4 449.7 L696.6 449.0 L696.9 449.8 L697.4 451.4 L697.5 451.9 L697.9 452.9 L698.5 454.8 L699.5 454.8 L700.4 450.9 L700.6 450.0 L701.1 447.9 L701.4 447.0 L701.6 448.1 L702.1 450.2 L702.3 450.9 L702.6 452.2 L703.2 454.8 L704.2 454.8 L705.1 451.4 L705.4 450.6 L705.9 448.8 L706.1 448.0 L706.4 449.0 L706.9 450.8 L707.0 451.4 L707.4 452.5 L708.0 454.8 L709.0 454.8 L709.9 450.9 L710.1 450.0 L710.6 447.9 L710.9 447.0 L711.1 448.1 L711.6 450.2 L711.8 450.9 L712.1 452.2 L712.8 454.8 L713.7 454.8 L714.6 451.4 L714.9 450.6 L715.4 448.8 L715.6 448.0 L715.9 449.0 L716.4 450.8 L716.5 451.4 L716.9 452.5 L717.5 454.8 L718.5 454.8 L719.4 449.4 L719.6 448.1 L720.1 445.3 L720.4 444.0 L720.6 445.5 L721.1 448.4 L721.3 449.4 L721.6 451.2 L722.2 454.8 L723.2 454.8 L724.1 447.4 L724.4 445.7 L724.9 441.8 L725.1 440.0 L725.4 442.1 L725.9 446.0 L726.0 447.4 L726.4 449.9 L727.0 454.8 L728.0 454.8 L728.9 448.9 L729.1 447.5 L729.6 444.4 L729.9 443.0 L730.1 444.7 L730.2 445.2 L730.2 467.7 L730.1 468.2 L729.9 469.1 L729.6 466.4 L729.1 462.4 L728.9 461.7 L728.0 457.3 L727.0 456.9 L726.4 462.3 L726.0 465.3 L725.9 466.4 L725.4 467.3 L725.1 468.2 L724.9 467.4 L724.4 466.5 L724.1 465.3 L723.2 456.9 L722.2 457.3 L721.6 460.6 L721.3 461.3 L721.1 461.8 L720.6 465.2 L720.4 468.1 L720.1 467.5 L719.6 463.6 L719.4 461.7 L718.5 457.1 L717.5 457.1 L716.9 458.7 L716.5 460.1 L716.4 461.1 L715.9 463.5 L715.6 463.9 L715.4 462.2 L714.9 460.1 L714.6 459.8 L713.7 457.2 L712.8 456.9 L712.1 460.0 L711.8 461.4 L711.6 461.9 L711.1 462.3 L710.9 462.9 L710.6 462.6 L710.1 462.3 L709.9 461.5 L709.0 456.9 L708.0 457.3 L707.4 459.2 L707.0 459.6 L706.9 460.0 L706.4 462.4 L706.1 464.3 L705.9 463.7 L705.4 461.0 L705.1 459.8 L704.2 457.2 L703.2 457.1 L702.6 459.0 L702.3 460.7 L702.1 461.9 L701.6 464.3 L701.4 464.6 L701.1 462.8 L700.6 460.7 L700.4 460.4 L699.5 457.2 L698.5 457.0 L697.9 459.3 L697.5 460.3 L697.4 460.6 L696.9 460.8 L696.6 461.4 L696.4 461.3 L695.9 461.1 L695.6 460.4 L694.7 456.9 L693.8 457.3 L692.8 460.3 L691.9 466.5 L690.9 460.5 L690.0 457.2 L689.0 457.0 L688.0 458.9 L687.1 460.6 L686.1 458.8 L685.2 457.2 L684.2 457.0 L683.3 459.7 L682.4 460.7 L681.4 459.8 L680.5 456.9 L679.5 457.3 L678.5 458.0 L677.6 460.3 L676.6 458.0 L675.7 457.2 L674.8 457.0 L673.8 458.3 L672.9 459.1 L671.9 458.2 L671.0 457.1 L670.0 457.0 L669.0 458.6 L668.1 459.2 L667.1 458.7 L666.2 456.9 L665.2 457.3 L664.3 458.4 L663.4 461.4 L662.4 458.4 L661.5 457.3 L660.5 457.0 L659.5 462.6 L658.6 466.3 L657.6 462.3 L656.7 457.1 L655.2 457.3Z" fill="#d02228" stroke="#4a080c" stroke-width="0.62" stroke-linejoin="round"/>
<path d="M731.2 142.6 L732.7 142.6 L733.5 163.0 L734.3 142.6 L734.4 145.1 L736.4 175.2 L738.4 142.6 L738.5 142.6 L738.3 159.2 L739.0 142.6 L740.5 145.3 L741.2 155.9 L741.6 142.6 L742.4 142.6 L743.2 154.6 L744.0 142.6 L744.1 142.6 L745.5 166.4 L746.9 142.6 L747.5 144.1 L748.0 156.2 L748.8 142.6 L749.6 142.6 L750.4 154.2 L751.1 142.6 L751.6 142.6 L752.4 155.3 L753.4 142.6 L753.5 142.6 L755.0 175.8 L757.0 142.6 L757.1 142.6 L757.3 164.0 L758.0 142.6 L758.8 142.6 L759.7 154.9 L760.4 142.6 L761.5 145.7 L762.3 159.2 L763.1 142.6 L763.2 142.6 L764.4 164.9 L765.7 142.6 L766.1 145.1 L766.7 159.9 L767.4 142.6 L768.5 144.9 L769.4 154.9 L770.1 142.6 L770.9 146.5 L771.8 162.4 L772.4 142.6 L772.5 145.6 L773.9 178.1 L775.8 142.6 L775.9 142.6 L776.4 163.1 L777.2 142.6 L778.2 142.6 L779.0 155.8 L779.7 142.6 L780.6 142.6 L781.4 159.2 L782.1 142.6 L782.2 142.6 L783.8 171.3 L785.2 142.6 L785.4 142.6 L786.0 152.9 L786.8 142.6 L787.9 142.6 L788.5 155.8 L789.2 142.6 L790.2 144.2 L790.8 153.6 L791.6 142.6 L791.7 142.6 L793.1 173.8 L794.9 142.6 L795.0 143.9 L795.2 161.0 L796.1 142.6 L797.1 145.1 L797.6 154.0 L798.2 142.6 L799.6 142.6 L800.3 156.8 L801.0 142.6 L801.3 144.9 L802.6 165.6 L804.2 142.6 L804.3 146.4 L804.5 154.6 L805.3 142.6 L806.1 142.6 L806.1 230.6 L805.8 230.6 L805.2 224.6 L804.3 227.2 L803.8 230.6 L802.4 202.5 L800.9 230.6 L800.7 230.6 L799.8 213.0 L799.2 229.3 L798.3 230.6 L797.6 222.0 L797.0 230.6 L796.5 230.6 L795.6 208.8 L795.1 228.3 L795.0 230.6 L792.9 199.6 L791.6 230.6 L791.5 230.6 L790.8 209.8 L790.1 229.3 L789.0 230.6 L788.3 218.8 L787.7 230.6 L786.4 230.6 L785.9 213.9 L785.1 230.6 L784.8 230.6 L783.5 206.5 L782.3 230.6 L781.7 230.6 L780.9 212.5 L780.2 230.6 L779.1 230.6 L778.4 221.0 L778.0 230.6 L777.1 230.6 L776.2 208.7 L775.8 230.6 L775.7 230.6 L774.0 197.6 L772.7 230.6 L772.6 230.6 L771.6 219.8 L770.8 228.1 L770.1 230.6 L769.5 218.8 L768.6 230.6 L767.9 230.6 L767.3 213.6 L766.5 230.6 L766.3 230.6 L764.7 205.9 L763.3 230.6 L762.7 230.6 L761.9 215.4 L761.1 230.6 L760.2 230.6 L759.6 220.6 L759.0 230.6 L758.1 230.6 L757.4 208.6 L757.4 230.6 L757.3 230.6 L755.2 203.2 L753.3 230.6 L753.2 230.6 L752.4 210.8 L751.6 230.6 L751.2 230.6 L750.6 220.1 L749.8 230.6 L748.5 230.6 L748.0 215.7 L747.2 228.9 L746.7 230.6 L745.3 204.3 L744.2 230.6 L744.1 230.6 L743.4 221.9 L742.7 230.6 L741.5 230.6 L740.9 222.1 L740.3 230.6 L739.2 230.6 L738.5 212.5 L738.0 229.1 L737.9 230.6 L736.0 206.1 L734.6 230.6 L734.5 230.6 L733.8 213.0 L732.9 230.6 L731.2 230.6Z" fill="#b82a98" stroke="#3e0c34" stroke-width="0.62" stroke-linejoin="round"/>
<path d="M731.2 412.0 L733.2 412.0 L734.1 431.8 L734.7 412.0 L734.8 412.0 L736.2 445.4 L738.3 412.0 L738.4 414.7 L738.2 428.0 L739.0 412.0 L740.2 412.0 L740.9 419.2 L741.5 412.0 L742.1 412.0 L742.7 428.9 L743.7 412.0 L744.4 412.0 L745.7 434.9 L746.9 412.0 L747.5 412.0 L748.1 427.3 L748.9 412.0 L749.9 412.0 L750.6 423.3 L751.1 412.0 L751.9 412.0 L752.6 432.3 L753.4 412.0 L753.5 415.9 L755.1 444.6 L756.9 412.0 L757.0 412.0 L757.6 431.8 L758.2 412.0 L759.3 415.0 L760.1 425.5 L760.7 412.0 L761.2 412.0 L762.0 426.4 L762.7 412.0 L763.4 415.0 L764.8 435.9 L766.2 412.0 L766.3 412.0 L766.8 426.2 L767.4 412.0 L768.6 412.0 L769.1 416.0 L769.8 412.0 L770.8 412.0 L771.7 434.6 L772.4 412.0 L772.5 412.0 L774.0 445.5 L775.9 412.0 L776.0 415.1 L776.5 429.3 L777.1 412.0 L778.2 412.0 L779.0 423.9 L779.6 412.0 L780.3 413.2 L780.9 418.9 L781.6 412.0 L782.2 412.0 L783.7 435.9 L785.3 412.0 L785.4 412.0 L785.6 428.6 L786.3 412.0 L787.6 415.5 L788.1 419.7 L788.7 412.0 L789.5 412.0 L790.3 431.6 L791.3 412.0 L791.5 413.5 L793.4 436.4 L795.1 412.0 L795.2 415.8 L795.6 434.2 L796.3 412.0 L797.2 414.7 L797.9 418.4 L798.8 412.0 L799.5 413.8 L800.4 429.3 L801.1 412.0 L801.3 412.0 L802.7 436.7 L804.0 412.0 L804.3 412.0 L804.9 429.0 L805.7 412.0 L806.1 412.0 L806.1 500.0 L805.9 500.0 L805.3 491.1 L804.4 500.0 L804.0 500.0 L802.7 472.5 L801.2 500.0 L800.7 500.0 L799.8 481.3 L799.1 500.0 L798.2 500.0 L797.7 487.4 L796.9 500.0 L796.0 500.0 L795.1 483.9 L795.4 496.9 L795.3 500.0 L793.2 468.7 L791.6 500.0 L791.5 500.0 L790.7 478.6 L790.1 500.0 L789.1 500.0 L788.4 487.5 L788.0 500.0 L786.8 500.0 L786.2 485.0 L785.5 500.0 L784.7 500.0 L783.1 470.1 L782.3 496.1 L782.2 500.0 L781.6 485.4 L780.6 500.0 L779.5 500.0 L778.9 488.2 L778.2 500.0 L777.5 500.0 L776.8 478.3 L775.8 500.0 L775.5 500.0 L773.8 474.2 L772.5 500.0 L772.4 500.0 L771.5 490.7 L770.7 500.0 L770.1 500.0 L769.6 493.7 L768.9 500.0 L767.4 500.0 L766.6 484.1 L765.9 500.0 L765.7 500.0 L764.4 476.3 L762.9 500.0 L762.8 500.0 L761.9 486.8 L761.2 500.0 L760.7 500.0 L759.9 493.2 L759.4 500.0 L758.5 500.0 L757.6 485.3 L757.1 500.0 L757.0 500.0 L755.2 463.4 L753.5 500.0 L753.4 500.0 L752.7 479.9 L752.0 500.0 L750.8 500.0 L750.1 492.0 L749.5 497.8 L748.9 500.0 L748.1 482.3 L747.3 498.3 L746.9 500.0 L745.6 476.5 L744.1 497.9 L743.9 500.0 L743.1 481.6 L742.4 500.0 L741.8 500.0 L741.0 489.5 L740.4 500.0 L739.3 500.0 L738.5 482.0 L738.0 500.0 L737.9 500.0 L736.1 465.2 L734.8 500.0 L734.7 500.0 L733.9 482.1 L732.9 500.0 L731.2 500.0Z" fill="#b82a98" stroke="#3e0c34" stroke-width="0.62" stroke-linejoin="round"/>
<path d="M807.1 142.6 L809.2 143.7 L809.8 163.1 L810.7 142.6 L810.8 142.6 L812.2 171.1 L814.3 142.6 L814.4 144.7 L814.6 163.0 L815.3 142.6 L815.8 142.6 L816.6 151.7 L817.3 142.6 L818.1 142.6 L818.9 157.9 L819.6 142.6 L820.3 142.6 L821.9 170.2 L823.3 142.6 L823.4 145.3 L824.2 154.7 L825.0 142.6 L825.5 142.6 L826.1 155.8 L826.8 142.6 L828.0 142.6 L828.6 162.0 L829.4 142.6 L829.5 142.6 L831.0 174.0 L832.8 142.6 L832.9 142.6 L833.1 165.5 L834.1 142.6 L835.4 142.6 L836.0 150.6 L836.6 142.6 L837.5 145.8 L838.3 161.0 L839.1 142.6 L839.2 142.6 L840.4 160.3 L841.9 142.6 L842.2 142.6 L842.7 158.9 L843.5 142.6 L844.3 142.6 L845.2 149.8 L845.8 142.6 L846.7 145.2 L847.6 164.6 L848.3 142.6 L848.4 142.6 L849.8 175.2 L852.0 142.6 L852.1 145.1 L852.4 159.0 L853.1 142.6 L853.9 142.6 L854.4 151.8 L855.2 142.6 L856.1 146.0 L856.8 161.0 L857.6 142.6 L858.1 145.8 L859.6 169.5 L861.2 142.6 L861.3 142.6 L861.8 156.9 L862.5 142.6 L863.5 142.6 L864.1 150.0 L864.6 142.6 L866.0 142.6 L866.9 160.5 L867.6 142.6 L867.7 145.1 L869.2 176.5 L871.2 142.6 L871.3 142.6 L871.0 161.3 L871.9 142.6 L873.3 142.6 L874.0 151.3 L874.5 142.6 L875.5 142.6 L876.4 150.6 L877.1 142.6 L877.2 142.6 L878.8 166.2 L880.2 142.6 L880.3 145.6 L880.8 161.1 L881.6 142.6 L882.0 142.6 L882.0 230.6 L881.7 230.6 L881.0 220.0 L880.3 230.6 L880.2 230.6 L878.6 205.4 L877.1 230.6 L876.6 230.6 L875.8 213.4 L875.1 230.6 L874.6 230.6 L873.7 221.8 L873.1 230.6 L872.3 230.6 L871.5 207.6 L871.0 230.6 L870.9 230.6 L869.0 193.8 L867.4 230.6 L867.3 230.6 L866.4 211.6 L865.5 230.6 L864.7 230.6 L864.2 224.0 L863.5 230.6 L862.8 230.6 L862.0 222.5 L861.4 230.6 L860.7 230.6 L859.4 206.3 L858.3 230.6 L858.2 230.6 L857.3 214.6 L856.6 228.4 L855.2 230.6 L854.4 224.4 L853.7 230.6 L853.0 230.6 L852.0 210.2 L851.8 226.9 L851.7 230.6 L849.9 194.1 L848.7 230.6 L848.6 230.6 L847.8 215.6 L847.1 230.6 L846.0 230.6 L845.2 224.3 L844.7 226.8 L843.6 230.6 L842.7 217.2 L842.3 227.2 L842.2 230.6 L840.6 208.4 L839.3 230.6 L839.2 230.6 L838.4 212.2 L837.5 230.6 L836.2 230.6 L835.6 226.6 L835.0 230.6 L834.4 230.6 L833.7 210.5 L833.2 230.6 L833.1 230.6 L831.0 196.1 L829.7 226.8 L829.6 230.6 L828.8 213.3 L827.9 227.6 L826.7 230.6 L826.2 226.6 L825.5 228.5 L824.8 230.6 L824.1 223.3 L823.3 230.6 L822.7 230.6 L821.3 206.2 L819.8 230.6 L819.7 230.6 L818.8 212.4 L818.2 230.6 L817.2 230.6 L816.5 223.1 L815.8 228.1 L815.1 230.6 L814.3 215.7 L814.1 230.6 L814.0 230.6 L811.9 205.9 L810.3 226.8 L810.2 230.6 L809.5 207.9 L808.7 230.6 L807.1 230.6Z" fill="#c42a2a" stroke="#480c0c" stroke-width="0.62" stroke-linejoin="round"/>
<path d="M807.1 412.0 L809.0 412.0 L809.9 429.3 L810.5 412.0 L810.6 412.0 L812.4 447.7 L814.3 412.0 L814.4 412.0 L814.3 432.0 L815.0 412.0 L815.7 412.0 L816.3 425.5 L817.2 412.0 L818.3 412.0 L819.1 429.9 L819.8 412.0 L820.0 412.0 L821.6 439.2 L822.9 412.0 L823.4 412.0 L824.1 428.2 L824.7 412.0 L825.3 413.1 L826.1 425.5 L826.7 412.0 L828.1 412.0 L829.0 431.6 L829.6 412.0 L829.7 415.8 L831.2 441.2 L832.8 412.0 L832.9 412.0 L833.5 430.3 L834.2 412.0 L835.4 412.0 L835.9 419.7 L836.6 412.0 L837.6 412.0 L838.4 428.1 L839.1 412.0 L839.2 412.0 L840.3 440.6 L841.8 412.0 L841.9 412.0 L842.6 430.2 L843.5 412.0 L844.9 414.8 L845.4 421.5 L846.1 412.0 L846.9 412.0 L847.8 431.7 L848.7 412.0 L848.8 413.7 L850.1 447.7 L851.9 412.0 L852.0 412.0 L852.6 431.8 L853.5 412.0 L853.9 412.0 L854.4 419.5 L855.2 412.0 L856.4 412.0 L857.3 429.7 L857.9 412.0 L858.1 412.0 L859.7 438.1 L861.0 412.0 L861.3 412.0 L862.1 429.4 L862.7 412.0 L863.2 412.0 L863.9 416.0 L864.7 412.0 L866.1 412.0 L866.7 427.1 L867.6 412.0 L867.7 415.5 L868.6 444.0 L870.7 412.0 L870.8 412.0 L871.2 430.5 L872.0 412.0 L872.9 415.5 L873.5 419.7 L874.3 412.0 L875.5 413.9 L876.4 426.8 L877.1 412.0 L877.2 412.0 L878.3 434.9 L879.7 412.0 L880.1 412.0 L881.0 429.8 L881.6 412.0 L882.0 412.0 L882.0 500.0 L881.8 500.0 L881.0 487.3 L880.3 497.0 L880.0 500.0 L878.6 476.2 L877.3 500.0 L876.6 500.0 L875.9 481.8 L875.2 500.0 L874.2 500.0 L873.4 486.9 L872.8 498.9 L871.8 500.0 L871.2 479.6 L871.3 500.0 L871.2 500.0 L869.0 466.5 L867.6 500.0 L867.5 500.0 L866.7 482.8 L865.9 500.0 L864.8 500.0 L864.0 490.6 L863.3 500.0 L862.7 500.0 L861.8 486.6 L861.0 500.0 L860.6 500.0 L859.4 484.2 L858.0 500.0 L857.6 500.0 L857.0 486.8 L856.1 497.4 L855.3 500.0 L854.6 491.5 L854.0 500.0 L853.1 500.0 L852.2 483.2 L851.8 497.6 L851.7 500.0 L849.9 466.3 L848.3 500.0 L848.2 500.0 L847.5 479.8 L846.6 500.0 L845.5 500.0 L845.0 487.7 L844.4 500.0 L843.9 500.0 L843.2 486.8 L842.3 500.0 L841.7 500.0 L840.3 472.3 L838.9 500.0 L838.6 500.0 L837.9 485.9 L837.3 498.6 L836.7 500.0 L836.1 491.6 L835.3 500.0 L834.0 500.0 L833.2 482.5 L833.4 500.0 L833.3 500.0 L831.3 471.6 L829.6 496.7 L829.5 500.0 L828.5 478.9 L827.8 500.0 L827.2 500.0 L826.4 490.6 L825.7 498.2 L825.0 500.0 L824.2 488.0 L823.3 499.0 L822.9 500.0 L821.7 471.7 L820.1 498.5 L819.9 500.0 L819.1 492.4 L818.4 497.6 L817.4 500.0 L816.8 496.0 L816.3 498.1 L815.2 500.0 L814.5 478.2 L813.8 496.7 L813.7 500.0 L811.8 467.4 L810.3 500.0 L810.2 500.0 L809.5 479.3 L808.7 500.0 L807.1 500.0Z" fill="#c42a2a" stroke="#480c0c" stroke-width="0.62" stroke-linejoin="round"/>
<path d="M883.0 185.4 L884.9 185.4 L885.9 181.0 L886.9 176.6 L887.9 181.0 L888.9 185.4 L889.8 185.4 L890.8 183.0 L891.8 180.6 L892.8 183.0 L893.8 185.4 L894.7 185.4 L895.7 183.5 L896.7 181.6 L897.7 183.5 L898.7 185.4 L899.6 185.4 L900.6 184.5 L901.6 183.6 L902.6 184.5 L903.6 185.4 L904.4 185.4 L904.4 187.9 L903.6 187.5 L902.6 188.8 L901.6 188.9 L900.6 188.8 L899.6 187.5 L898.7 187.8 L897.7 189.2 L896.7 191.6 L895.7 189.2 L894.7 187.8 L893.8 187.7 L892.8 189.9 L891.8 192.1 L890.8 189.9 L889.8 187.7 L888.9 187.6 L887.9 192.1 L886.9 195.0 L885.9 192.2 L884.9 187.6 L883.0 187.5Z" fill="#c030a0" stroke="#48103e" stroke-width="0.62" stroke-linejoin="round"/>
<path d="M883.0 454.8 L884.9 454.8 L885.9 450.9 L886.9 447.0 L887.9 450.9 L888.9 454.8 L889.8 454.8 L890.8 452.4 L891.8 450.0 L892.8 452.4 L893.8 454.8 L894.7 454.8 L895.7 452.9 L896.7 451.0 L897.7 452.9 L898.7 454.8 L899.6 454.8 L900.6 453.9 L901.6 453.0 L902.6 453.9 L903.6 454.8 L904.4 454.8 L904.4 457.3 L903.6 456.9 L902.6 458.2 L901.6 458.3 L900.6 458.2 L899.6 456.9 L898.7 457.2 L897.7 458.6 L896.7 461.0 L895.7 458.6 L894.7 457.2 L893.8 457.1 L892.8 459.3 L891.8 461.5 L890.8 459.3 L889.8 457.1 L888.9 457.0 L887.9 461.1 L886.9 463.6 L885.9 461.1 L884.9 457.0 L883.0 456.9Z" fill="#c030a0" stroke="#48103e" stroke-width="0.62" stroke-linejoin="round"/>
<path d="M905.4 184.1 L905.5 184.0 L906.5 182.6 L907.5 184.0 L908.5 185.4 L909.4 185.4 L910.4 184.2 L911.4 183.1 L912.4 184.2 L913.4 185.4 L914.3 185.4 L915.3 184.0 L916.3 182.6 L917.3 184.0 L918.3 185.4 L918.8 185.4 L919.5 177.0 L920.2 168.6 L920.9 177.0 L921.2 180.6 L921.6 184.0 L921.9 183.0 L922.6 180.6 L923.3 183.0 L923.6 184.0 L924.0 182.9 L924.3 181.0 L925.0 176.6 L925.7 181.0 L926.0 182.9 L926.4 183.7 L926.7 182.5 L927.4 179.6 L928.1 182.5 L928.4 183.7 L928.8 183.7 L929.1 182.5 L929.8 179.6 L930.5 182.5 L930.8 183.8 L931.2 184.4 L931.5 183.5 L932.2 181.6 L932.5 182.4 L932.9 183.6 L933.2 183.8 L933.6 183.0 L934.0 182.1 L934.8 183.9 L935.5 185.6 L935.7 185.6 L936.5 184.1 L937.2 182.6 L938.0 184.2 L938.7 185.8 L938.9 185.8 L939.6 184.5 L940.4 183.1 L941.1 184.5 L941.9 185.9 L942.1 185.9 L942.9 184.8 L943.6 183.6 L944.4 184.8 L945.1 186.0 L945.3 186.1 L946.0 185.1 L946.8 184.1 L947.5 185.1 L948.3 186.2 L948.5 186.2 L949.2 185.4 L950.0 184.6 L950.8 185.4 L951.5 186.3 L951.7 186.3 L952.5 185.7 L953.2 185.1 L954.0 185.7 L954.7 186.3 L954.9 186.3 L955.6 185.9 L956.4 185.6 L957.1 185.9 L957.9 186.3 L958.0 186.3 L958.0 186.8 L957.9 186.8 L957.1 187.3 L956.4 187.4 L955.6 187.2 L954.9 186.9 L954.7 186.9 L954.0 187.3 L953.2 188.2 L952.5 187.4 L951.7 186.9 L951.5 186.9 L950.8 187.8 L950.0 188.1 L949.2 187.9 L948.5 187.0 L948.3 186.9 L947.5 188.0 L946.8 189.2 L946.0 187.7 L945.3 187.2 L945.1 187.2 L944.4 188.1 L943.6 189.2 L942.9 188.5 L942.1 187.1 L941.9 187.1 L941.1 188.8 L940.4 189.7 L939.6 188.4 L938.9 187.5 L938.7 187.5 L938.0 188.4 L937.2 190.7 L936.5 188.9 L935.7 187.4 L935.5 187.4 L934.8 189.5 L934.0 190.1 L933.6 189.5 L933.2 189.3 L932.9 189.9 L932.5 190.7 L932.2 190.9 L931.5 189.2 L931.2 188.8 L930.8 189.7 L930.5 190.7 L929.8 191.9 L929.1 190.8 L928.8 189.7 L928.4 189.4 L928.1 190.0 L927.4 192.6 L926.7 191.0 L926.4 189.4 L926.0 189.6 L925.7 190.9 L925.0 196.9 L924.3 191.9 L924.0 189.6 L923.6 188.6 L923.3 189.8 L922.6 193.0 L921.9 189.4 L921.6 188.6 L921.2 192.1 L920.9 196.7 L920.2 203.3 L919.5 194.1 L918.8 187.9 L918.3 187.8 L917.3 188.8 L916.3 190.6 L915.3 188.8 L914.3 187.8 L913.4 187.5 L912.4 189.1 L911.4 189.3 L910.4 189.1 L909.4 187.5 L908.5 187.9 L907.5 188.6 L906.5 190.9 L905.5 188.6 L905.4 188.5Z" fill="#c030a0" stroke="#48103e" stroke-width="0.62" stroke-linejoin="round"/>
<path d="M905.4 453.5 L905.5 453.4 L906.5 452.0 L907.5 453.4 L908.5 454.8 L909.4 454.8 L910.4 453.6 L911.4 452.5 L912.4 453.6 L913.4 454.8 L914.3 454.8 L915.3 453.4 L916.3 452.0 L917.3 453.4 L918.3 454.8 L919.2 454.8 L920.2 452.9 L921.2 451.0 L922.2 452.9 L923.2 454.8 L924.1 454.8 L925.1 452.4 L926.1 450.0 L927.1 452.4 L928.1 454.8 L929.0 454.8 L930.0 452.9 L931.0 451.0 L932.0 452.9 L932.5 453.9 L933.0 454.0 L933.2 453.5 L933.9 452.2 L934.0 452.0 L934.8 453.5 L934.9 453.5 L935.5 452.6 L935.7 452.3 L935.9 452.0 L936.5 452.8 L936.9 453.0 L937.2 452.5 L937.9 453.7 L938.0 453.8 L938.7 455.2 L938.9 455.2 L939.6 454.1 L940.4 453.0 L941.1 454.1 L941.9 455.3 L942.1 455.3 L942.9 454.2 L943.6 453.0 L944.4 454.2 L945.1 455.4 L945.3 455.5 L946.0 454.5 L946.8 453.5 L947.5 454.5 L948.3 455.6 L948.5 455.6 L949.2 454.8 L950.0 454.0 L950.8 454.8 L951.5 455.7 L951.7 455.7 L952.5 455.1 L953.2 454.5 L954.0 455.1 L954.7 455.7 L954.9 455.7 L955.6 455.4 L956.4 455.0 L957.1 455.4 L957.9 455.7 L958.0 455.7 L958.0 456.2 L957.9 456.2 L957.1 456.7 L956.4 456.8 L955.6 456.6 L954.9 456.3 L954.7 456.3 L954.0 456.7 L953.2 457.6 L952.5 456.8 L951.7 456.3 L951.5 456.3 L950.8 457.2 L950.0 457.5 L949.2 457.3 L948.5 456.4 L948.3 456.3 L947.5 457.4 L946.8 458.6 L946.0 457.1 L945.3 456.6 L945.1 456.6 L944.4 457.5 L943.6 458.6 L942.9 457.9 L942.1 456.5 L941.9 456.5 L941.1 458.0 L940.4 458.7 L939.6 457.6 L938.9 456.9 L938.7 456.9 L938.0 457.7 L937.9 457.7 L937.2 459.6 L936.9 459.2 L936.5 459.0 L935.9 459.0 L935.7 458.9 L935.5 458.9 L934.9 458.7 L934.8 458.7 L934.0 459.1 L933.9 458.9 L933.2 458.5 L933.0 458.2 L932.5 458.1 L932.0 458.4 L931.0 461.3 L930.0 458.4 L929.0 457.3 L928.1 457.0 L927.1 459.6 L926.1 461.1 L925.1 459.6 L924.1 457.0 L923.2 457.1 L922.2 458.8 L921.2 460.6 L920.2 458.9 L919.2 457.1 L918.3 457.2 L917.3 458.2 L916.3 460.0 L915.3 458.2 L914.3 457.2 L913.4 456.9 L912.4 458.5 L911.4 458.7 L910.4 458.5 L909.4 456.9 L908.5 457.3 L907.5 458.0 L906.5 460.3 L905.5 458.0 L905.4 457.9Z" fill="#c030a0" stroke="#48103e" stroke-width="0.62" stroke-linejoin="round"/>
<path d="M123 51V590" stroke="#5c5e60" stroke-width="1"/>
<path d="M350.8 51V590" stroke="#141414" stroke-width="1.1"/>
<path d="M426.8 51V590" stroke="#141414" stroke-width="1.1"/>
<path d="M502.7 51V590" stroke="#141414" stroke-width="1.1"/>
<path d="M578.7 51V590" stroke="#141414" stroke-width="1.1"/>
<path d="M654.6 51V590" stroke="#141414" stroke-width="1.1"/>
<path d="M730.6 51V590" stroke="#141414" stroke-width="1.1"/>
<path d="M806.5 51V590" stroke="#141414" stroke-width="1.1"/>
<path d="M882.4 51V590" stroke="#141414" stroke-width="1.1"/>
<path d="M904.8 51V590" stroke="#1a1a1a" stroke-width="0.8"/>
<path d="M958.6 51V590.5" stroke="#141414" stroke-width="1.8"/>
<path d="M122.5 51.2H959.4" stroke="#2a2a2a" stroke-width="0.9"/>
<path d="M122.5 307.6H959" stroke="#161616" stroke-width="1.1"/>
<path d="M122.5 590H959.4" stroke="#1c1c1c" stroke-width="1.1"/>
<path d="M905.2 51.5L958.4 320.3" stroke="#1a1a1a" stroke-width="0.9" fill="none"/>
<path d="M905.2 320.3L958.4 589.5" stroke="#1a1a1a" stroke-width="0.9" fill="none"/>
<circle cx="123" cy="307.6" r="1.5" fill="#fff" stroke="#111" stroke-width="0.7"/>
<circle cx="350.8" cy="307.6" r="1.5" fill="#fff" stroke="#111" stroke-width="0.7"/>
<circle cx="426.8" cy="307.6" r="1.5" fill="#fff" stroke="#111" stroke-width="0.7"/>
<circle cx="502.7" cy="307.6" r="1.5" fill="#fff" stroke="#111" stroke-width="0.7"/>
<circle cx="578.7" cy="307.6" r="1.5" fill="#fff" stroke="#111" stroke-width="0.7"/>
<circle cx="654.6" cy="307.6" r="1.5" fill="#fff" stroke="#111" stroke-width="0.7"/>
<circle cx="730.6" cy="307.6" r="1.5" fill="#fff" stroke="#111" stroke-width="0.7"/>
<circle cx="806.5" cy="307.6" r="1.5" fill="#fff" stroke="#111" stroke-width="0.7"/>
<circle cx="882.4" cy="307.6" r="1.5" fill="#fff" stroke="#111" stroke-width="0.7"/>
</svg>
<div class="cl" style="left:124.3px;width:119px">Old Town Road Instrumental -144</div>
<div class="db" style="left:124.5px"><i><svg style="position:absolute;left:0;top:0" width="8" height="8"><circle cx="3.9" cy="2.9" r="1.5" fill="none" stroke="#fff" stroke-width="0.9"/><path d="M3.9 4.2v3" stroke="#fff" stroke-width="0.9"/></svg></i><b>0 dB</b></div>
<div class="cl" style="left:352.1px;width:73.4px">Old Town Road Insti</div>
<div class="db" style="left:352.3px"><i><svg style="position:absolute;left:0;top:0" width="8" height="8"><circle cx="3.9" cy="2.9" r="1.5" fill="none" stroke="#fff" stroke-width="0.9"/><path d="M3.9 4.2v3" stroke="#fff" stroke-width="0.9"/></svg></i><b>0 dB</b></div>
<div class="cl" style="left:428.1px;width:73.3px">Old Town Road Insti</div>
<div class="db" style="left:428.3px"><i><svg style="position:absolute;left:0;top:0" width="8" height="8"><circle cx="3.9" cy="2.9" r="1.5" fill="none" stroke="#fff" stroke-width="0.9"/><path d="M3.9 4.2v3" stroke="#fff" stroke-width="0.9"/></svg></i><b>0 dB</b></div>
<div class="cl" style="left:504px;width:73.4px">Old Town Road Insti</div>
<div class="db" style="left:504.2px"><i><svg style="position:absolute;left:0;top:0" width="8" height="8"><circle cx="3.9" cy="2.9" r="1.5" fill="none" stroke="#fff" stroke-width="0.9"/><path d="M3.9 4.2v3" stroke="#fff" stroke-width="0.9"/></svg></i><b>0 dB</b></div>
<div class="cl" style="left:580px;width:73.3px">Old Town Road Insti</div>
<div class="db" style="left:580.2px"><i><svg style="position:absolute;left:0;top:0" width="8" height="8"><circle cx="3.9" cy="2.9" r="1.5" fill="none" stroke="#fff" stroke-width="0.9"/><path d="M3.9 4.2v3" stroke="#fff" stroke-width="0.9"/></svg></i><b>0 dB</b></div>
<div class="cl" style="left:655.9px;width:73.4px">Old Town Road Insti</div>
<div class="db" style="left:656.1px"><i><svg style="position:absolute;left:0;top:0" width="8" height="8"><circle cx="3.9" cy="2.9" r="1.5" fill="none" stroke="#fff" stroke-width="0.9"/><path d="M3.9 4.2v3" stroke="#fff" stroke-width="0.9"/></svg></i><b>0 dB</b></div>
<div class="cl" style="left:731.9px;width:73.3px">Old Town Road Insti</div>
<div class="db" style="left:732.1px"><i><svg style="position:absolute;left:0;top:0" width="8" height="8"><circle cx="3.9" cy="2.9" r="1.5" fill="none" stroke="#fff" stroke-width="0.9"/><path d="M3.9 4.2v3" stroke="#fff" stroke-width="0.9"/></svg></i><b>0 dB</b></div>
<div class="cl" style="left:807.8px;width:73.3px">Old Town Road Insti</div>
<div class="db" style="left:808px"><i><svg style="position:absolute;left:0;top:0" width="8" height="8"><circle cx="3.9" cy="2.9" r="1.5" fill="none" stroke="#fff" stroke-width="0.9"/><path d="M3.9 4.2v3" stroke="#fff" stroke-width="0.9"/></svg></i><b>0 dB</b></div>
<div class="cl" style="left:883.7px;width:19.5px">Old T</div>
<div class="abs" style="left:119px;top:142.1px;width:4px;height:1px;background:#808284"></div>
<div class="abs" style="left:119px;top:164.1px;width:4px;height:1px;background:#808284"></div>
<div class="abs" style="left:119px;top:186.1px;width:4px;height:1px;background:#808284"></div>
<div class="abs" style="left:119px;top:208.1px;width:4px;height:1px;background:#808284"></div>
<div class="abs" style="left:119px;top:230.1px;width:4px;height:1px;background:#808284"></div>
<div class="abs" style="left:119px;top:411.5px;width:4px;height:1px;background:#808284"></div>
<div class="abs" style="left:119px;top:433.5px;width:4px;height:1px;background:#808284"></div>
<div class="abs" style="left:119px;top:455.5px;width:4px;height:1px;background:#808284"></div>
<div class="abs" style="left:119px;top:477.5px;width:4px;height:1px;background:#808284"></div>
<div class="abs" style="left:119px;top:499.5px;width:4px;height:1px;background:#808284"></div>
<div class="abs" style="left:111px;top:590.7px;width:889px;height:2px;background:#6e8a8e"></div>
<div class="abs" style="left:350.3px;top:590.6px;width:1px;height:2px;background:#e8c830"></div>
<div class="abs" style="left:426.3px;top:590.6px;width:1px;height:2px;background:#e8c830"></div>
<div class="abs" style="left:502.2px;top:590.6px;width:1px;height:2px;background:#e8c830"></div>
<div class="abs" style="left:578.2px;top:590.6px;width:1px;height:2px;background:#e8c830"></div>
<div class="abs" style="left:654.1px;top:590.6px;width:1px;height:2px;background:#e8c830"></div>
<div class="abs" style="left:730.1px;top:590.6px;width:1px;height:2px;background:#e8c830"></div>
<div class="abs" style="left:806.0px;top:590.6px;width:1px;height:2px;background:#e8c830"></div>
<div class="abs" style="left:881.9px;top:590.6px;width:1px;height:2px;background:#e8c830"></div>
<div class="abs" style="left:904.3px;top:590.6px;width:1px;height:2px;background:#e8c830"></div>
<div class="abs" style="left:957.9px;top:590.6px;width:1px;height:2px;background:#e8c830"></div>
<div class="abs" style="left:994.2px;top:0;width:1px;height:51px;background:#e22036"></div>
<div class="abs" style="left:995.5px;top:51px;width:1px;height:541px;background:#8aa8c8"></div>
<svg class="abs" style="left:960px;top:0" width="30" height="14" viewBox="0 0 30 14"><path d="M8.3 2v8.8" stroke="#0c0c0c" stroke-width="1.1"/><path d="M8.8 2.2h3.6l-3.4 3.4z" fill="#f4f4f4" stroke="#0c0c0c" stroke-width="0.7"/><path d="M14.8 -1h5.6v7.6h3.2l-6 6.1l-6-6.1h3.2z" fill="#4a9ae6" stroke="#08101c" stroke-width="1.1" stroke-linejoin="round"/><path d="M17.6 0v12.4" stroke="#08101c" stroke-width="0.9"/></svg>
</div></body></html>
